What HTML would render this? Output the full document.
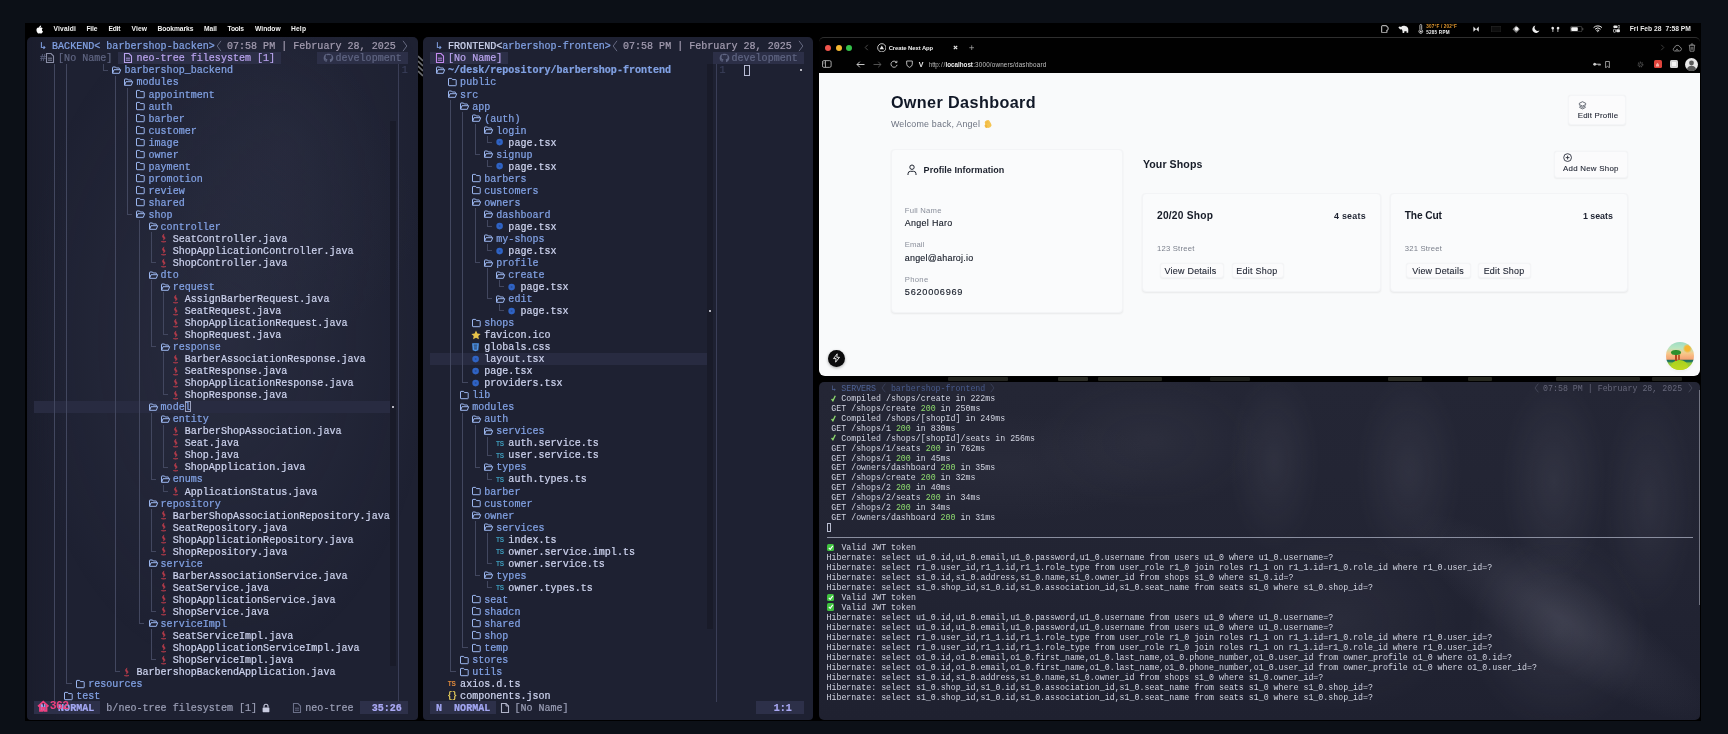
<!DOCTYPE html>
<html lang="en"><head><meta charset="utf-8"><title>desktop</title>
<style>
*{box-sizing:border-box;margin:0;padding:0}
html,body{width:1728px;height:734px;overflow:hidden;background:#0c1017}
body{position:relative;font-family:"Liberation Sans",sans-serif;will-change:transform;-webkit-font-smoothing:antialiased}
.r{position:absolute}
.t{position:absolute;white-space:pre;margin-top:1.4px;letter-spacing:.01px;-webkit-text-stroke:.22px currentColor;font-family:"Liberation Mono",monospace;font-size:10.048px;line-height:12.03px;height:12.03px}
.icw{position:absolute;width:12px;height:12.03px;display:block}
.ic{position:absolute;left:0;top:0;width:12px;height:12px;overflow:visible}
.tsi{position:absolute;left:1.7px;top:.9px;font:bold 6.5px/12.03px "Liberation Sans",sans-serif;letter-spacing:-.3px}
.jsi{position:absolute;left:1.2px;top:0;font:bold 9px/12.03px "Liberation Mono",monospace;color:#e0c85a;letter-spacing:-1px}
.s{position:absolute;white-space:pre;font-family:"Liberation Sans",sans-serif}
.m{position:absolute;white-space:pre;font-family:"Liberation Mono",monospace;font-size:8.279px;letter-spacing:.0078px;line-height:9.96px;height:9.96px;color:#d2d5e2}
.g{color:#8fdc6f}
svg{display:block}
</style></head><body>

<div class="r" style="left:24.50px;top:23.00px;width:1676.00px;height:698.00px;background:#000;"></div>
<svg class="r" style="left:34.500px;top:24.500px;width:8px;height:9px" viewBox="0 0 16 18"><path d="M11.200 4.300c.700-.900 1.200-2 1-3.300-1.100.1-2.300.800-3 1.700-.700.800-1.200 2-1 3.100 1.200.1 2.300-.600 3-1.500zM13.800 9.600c0-2 1.600-3 1.700-3-1-1.400-2.400-1.600-2.900-1.600-1.300-.100-2.400.700-3 .700s-1.600-.700-2.600-.700C5.600 5 4.300 5.800 3.600 7c-1.400 2.500-.400 6.100 1 8.100.700 1 1.500 2.100 2.500 2 1-.000 1.400-.600 2.600-.600s1.600.600 2.600.600c1.100 0 1.800-1 2.400-2 .800-1.100 1.100-2.200 1.100-2.300-.000-.000-2-.800-2-3.200z" fill="#fff"/></svg>
<span class="s" style="left:53.60px;top:25.42px;font-size:6.7px;line-height:8.71px;letter-spacing:0.153px;font-weight:bold;color:#f2f2f2;">Vivaldi</span>
<span class="s" style="left:86.40px;top:25.42px;font-size:6.7px;line-height:8.71px;letter-spacing:-0.149px;font-weight:bold;color:#f2f2f2;">File</span>
<span class="s" style="left:108.50px;top:25.42px;font-size:6.7px;line-height:8.71px;letter-spacing:-0.219px;font-weight:bold;color:#f2f2f2;">Edit</span>
<span class="s" style="left:131.50px;top:25.42px;font-size:6.7px;line-height:8.71px;letter-spacing:0.117px;font-weight:bold;color:#f2f2f2;">View</span>
<span class="s" style="left:157.50px;top:25.42px;font-size:6.7px;line-height:8.71px;letter-spacing:-0.062px;font-weight:bold;color:#f2f2f2;">Bookmarks</span>
<span class="s" style="left:204.00px;top:25.42px;font-size:6.7px;line-height:8.71px;letter-spacing:-0.011px;font-weight:bold;color:#f2f2f2;">Mail</span>
<span class="s" style="left:227.60px;top:25.42px;font-size:6.7px;line-height:8.71px;letter-spacing:-0.245px;font-weight:bold;color:#f2f2f2;">Tools</span>
<span class="s" style="left:255.00px;top:25.42px;font-size:6.7px;line-height:8.71px;letter-spacing:0.017px;font-weight:bold;color:#f2f2f2;">Window</span>
<span class="s" style="left:291.00px;top:25.42px;font-size:6.7px;line-height:8.71px;letter-spacing:0.160px;font-weight:bold;color:#f2f2f2;">Help</span>
<span class="s" style="left:1629.70px;top:25.42px;font-size:6.7px;line-height:8.71px;letter-spacing:0.033px;font-weight:bold;color:#e8e8e8;">Fri Feb 28  7:58 PM</span>
<svg class="r" style="left:1381.40px;top:24.80px;width:7.5px;height:8.5px" viewBox="0 0 7.5 8.5"><path d="M1.200 .7h4.200q.5 0 .5.5v.8h.6q.6 0 .6.600v1.800q0 .6-.6.600h-.6v2.300q0 .5-.5.500H1.200q-.5 0-.5-.5V1.200q0-.5.5-.5z" fill="none" stroke="#e8e8e8" stroke-width=".9"/></svg>
<svg class="r" style="left:1397.50px;top:24.80px;width:11px;height:8.5px" viewBox="0 0 11 8.5"><path d="M.4 2.200Q1.600 1.200 3 1.900 4.200.5 6.400.7q2.800.2 3.600 2.400.5 1.400.2 4.600H8.600l-.2-1.700q-1 .4-2 .2L6.200 8H4.600l-.1-2.300Q3.600 5 3.400 4.100q-.9.600-1.400.1Q1 3.400.4 2.200z" fill="#ececec"/></svg>
<svg class="r" style="left:1418.20px;top:24.40px;width:5.6px;height:9.8px" viewBox="0 0 5.6 9.8"><path d="M1.900 1.400a.9.9 0 0 1 1.800 0v4.400a1.900 1.900 0 1 1-1.800 0z" fill="none" stroke="#dcdcdc" stroke-width=".8"/><circle cx="2.800" cy="7.500" r="1" fill="#dcdcdc"/></svg>
<span class="s" style="left:1426.20px;top:23.52px;font-size:4.6px;line-height:5.98px;letter-spacing:0.185px;font-weight:bold;color:#e59a2e;">307°F / 202°F</span>
<span class="s" style="left:1426.20px;top:29.52px;font-size:4.6px;line-height:5.98px;letter-spacing:0.238px;font-weight:bold;color:#ededed;">5285 RPM</span>
<svg class="r" style="left:1473.40px;top:25.80px;width:6.2px;height:6.4px" viewBox="0 0 6.2 6.4"><path d="M.4.600L3.100 3.200.4 5.800zM5.800.600L3.100 3.200l2.700 2.600z" fill="#e4e4e4"/></svg>
<svg class="r" style="left:1490.80px;top:25.80px;width:10.4px;height:6.4px" viewBox="0 0 10.4 6.4"><rect x=".4" y=".4" width="9.600" height="5.600" fill="#0e0e0e" stroke="#262626" stroke-width=".7"/></svg>
<svg class="r" style="left:1511.80px;top:24.80px;width:8.4px;height:8.4px" viewBox="0 0 8.4 8.4"><path d="M4.200.5L7.900 4.200 4.200 7.900.5 4.200z" fill="#7c7c7c"/><circle cx="4.600" cy="3.800" r="1.900" fill="#f2f2f2"/></svg>
<svg class="r" style="left:1532.00px;top:25.00px;width:8px;height:8px" viewBox="0 0 8 8"><path d="M3.400.6A3.700 3.700 0 1 0 7.500 5.600 3.300 3.300 0 0 1 3.400.6z" fill="#efefef"/></svg>
<svg class="r" style="left:1551.30px;top:25.60px;width:8.8px;height:6.8px" viewBox="0 0 8.8 6.8"><path d="M1 .9q1.500-.4 2 .9.300 1.200-.7 1.600v2.600H1.500V3.400Q.3 3 .4 1.900.5 1.100 1 .9zM7.800.9q-1.500-.4-2 .9-.3 1.200.7 1.600v2.600h.800V3.400Q8.500 3 8.400 1.900 8.300 1.100 7.800.9z" fill="#e6e6e6"/></svg>
<svg class="r" style="left:1570.20px;top:26.00px;width:14px;height:6.2px" viewBox="0 0 14 6.2"><rect x=".4" y=".4" width="11.600" height="5.400" rx="1.500" fill="none" stroke="#5c5c5c" stroke-width=".7"/><rect x="1.200" y="1.200" width="6.600" height="3.800" rx=".8" fill="#f2f2f2"/><path d="M12.800 2.100v2" stroke="#5c5c5c" stroke-width=".9"/></svg>
<svg class="r" style="left:1593.00px;top:25.40px;width:9.6px;height:7.2px" viewBox="0 0 9.6 7.2"><path d="M.6 2.600a6 6 0 0 1 8.400 0M2 4.200a4 4 0 0 1 5.600 0M3.400 5.700a2 2 0 0 1 2.800 0" fill="none" stroke="#efefef" stroke-width="1"/><circle cx="4.800" cy="6.600" r=".6" fill="#efefef"/></svg>
<svg class="r" style="left:1613.00px;top:25.00px;width:7.4px;height:8px" viewBox="0 0 7.4 8"><rect x=".5" y=".5" width="3.600" height="2.600" rx=".7" fill="#e8e8e8"/><rect x="4.800" y=".5" width="2.100" height="2.600" rx=".7" fill="none" stroke="#e8e8e8" stroke-width=".7"/><rect x=".5" y="4.300" width="2.100" height="3" rx=".7" fill="none" stroke="#e8e8e8" stroke-width=".7"/><rect x="3.300" y="4.300" width="3.600" height="3" rx=".7" fill="#e8e8e8"/></svg>
<div class="r" style="left:26.50px;top:37.00px;width:391.00px;height:682.50px;background:#1e2132;border-radius:5px 5px 4px 4px;"></div>
<div class="r" style="left:422.50px;top:37.00px;width:390.00px;height:682.50px;background:#1e2132;border-radius:5px 5px 4px 4px;"></div>
<!--PANES-->
<div class="r" style="left:26.500px;top:37px;width:391px;height:682.500px;border-radius:5px;background:linear-gradient(90deg,rgba(20,22,34,.35) 0,rgba(20,22,34,0) 40px),radial-gradient(ellipse 260px 420px at 200px 300px,rgba(95,100,130,.16),transparent 80%),radial-gradient(ellipse 150px 200px at 260px 110px,rgba(95,100,130,.08),transparent)"></div>
<span class="t" style="left:40.00px;top:40.00px;color:#82a2e4;">↳</span>
<span class="t" style="left:52.06px;top:40.00px;color:#82a2e4;">BACKEND&lt;</span>
<span class="t" style="left:106.33px;top:40.00px;color:#82a2e4;">barbershop-backen&gt;</span>
<svg class="r" style="left:215.87px;top:40.00px;width:6px;height:12px" viewBox="0 0 6 12"><path d="M5 0.800L1.200 6 5 11.200" fill="none" stroke="#6d7089" stroke-width=".9"/></svg>
<span class="t" style="left:226.93px;top:40.00px;color:#a39cb0;">07:58 PM | February 28, 2025</span>
<svg class="r" style="left:401.80px;top:40.00px;width:6px;height:12px" viewBox="0 0 6 12"><path d="M1 0.800L4.800 6 1 11.200" fill="none" stroke="#6d7089" stroke-width=".9"/></svg>
<span class="t" style="left:40.00px;top:52.03px;color:#5f6582;">#</span>
<span class="icw" style="left:44.23px;top:52.03px"><svg class="ic" viewBox="0 0 12 12"><path d="M2.500 1.500h4.500l2.500 2.500v6.500h-7z" fill="none" stroke="#8a8ea6" stroke-width="1.100"/><path d="M4 6.200h4M4 8.200h4" stroke="#8a8ea6" stroke-width=".9"/></svg></span>
<span class="t" style="left:58.09px;top:52.03px;color:#5f6582;">[No Name]</span>
<div class="r" style="left:118.39px;top:52.03px;width:162.81px;height:12.03px;background:#2c2f47;"></div>
<span class="icw" style="left:122.22px;top:52.03px"><svg class="ic" viewBox="0 0 12 12"><path d="M2.500 1.500h4.500l2.500 2.500v6.500h-7z" fill="none" stroke="#b9a3ee" stroke-width="1.100"/><path d="M4 6.200h4M4 8.200h4" stroke="#b9a3ee" stroke-width=".9"/></svg></span>
<span class="t" style="left:136.48px;top:52.03px;color:#b9a3ee;">neo-tree filesystem [1]</span>
<div class="r" style="left:317.38px;top:52.03px;width:90.45px;height:12.03px;background:#2c2f47;"></div>
<span class="icw" style="left:322.41px;top:52.03px"><svg class="ic" viewBox="0 0 12 12"><path d="M6 1.800a4.200 4.200 0 0 0-1.400 8.200v-1.600q-1.600.3-1.900-.9.900.1 1.300.8.500.5 1.200.1.100-.5.400-.8-2.200-.3-2.200-2.300 0-.8.500-1.400-.2-.7.100-1.300.700 0 1.400.6 1.200-.3 2.400 0 .700-.6 1.400-.6.300.6.100 1.300.5.600.5 1.400 0 2-2.200 2.300.4.400.4 1.100v1.500a4.200 4.200 0 0 0-2-8.400z" fill="#5f6582"/></svg></span>
<span class="t" style="left:335.47px;top:52.03px;color:#5f6582;">development</span>
<div class="r" style="left:34.00px;top:400.90px;width:355.74px;height:12.03px;background:#282b41;"></div>
<div class="r" style="left:389.74px;top:120.60px;width:6.03px;height:544.96px;background:#191b29;"></div>
<div class="r" style="left:398.29px;top:64.06px;width:1.00px;height:637.59px;background:#3a3e57;"></div>
<span class="t" style="left:401.80px;top:64.06px;color:#3a3f5a;">1</span>
<div class="r" style="left:391.54px;top:405.90px;width:2.20px;height:2.20px;background:#e8e8f0;border-radius:50%;"></div>
<div class="r" style="left:54.38px;top:64.06px;width:1.00px;height:637.59px;background:#42475f;"></div>
<div class="r" style="left:66.44px;top:64.06px;width:1.00px;height:613.53px;background:#42475f;"></div>
<div class="r" style="left:102.62px;top:63.76px;width:1.00px;height:6.81px;background:#42475f;"></div>
<div class="r" style="left:102.62px;top:69.58px;width:5.43px;height:1.00px;background:#42475f;"></div>
<span class="icw" style="left:110.36px;top:64.06px"><svg class="ic" viewBox="0 0 12 12"><path d="M2.500 9.200V3.500q0-.500.500-.500h2.500l.800 1h2.700q.500 0 .500.500v1" fill="none" stroke="#9bb6ee" stroke-width="1"/><path d="M2.600 9.300l1.400-3.600h6.700l-1.400 3.600z" fill="none" stroke="#9bb6ee" stroke-width="1" stroke-linejoin="round"/></svg></span>
<span class="t" style="left:124.42px;top:64.06px;color:#82a2e4;">barbershop_backend</span>
<div class="r" style="left:114.67px;top:75.79px;width:1.00px;height:12.63px;background:#42475f;"></div>
<span class="icw" style="left:122.42px;top:76.09px"><svg class="ic" viewBox="0 0 12 12"><path d="M2.500 9.200V3.500q0-.500.500-.500h2.500l.800 1h2.700q.500 0 .500.500v1" fill="none" stroke="#9bb6ee" stroke-width="1"/><path d="M2.600 9.300l1.400-3.600h6.700l-1.400 3.600z" fill="none" stroke="#9bb6ee" stroke-width="1" stroke-linejoin="round"/></svg></span>
<span class="t" style="left:136.48px;top:76.09px;color:#82a2e4;">modules</span>
<div class="r" style="left:114.67px;top:87.82px;width:1.00px;height:12.63px;background:#42475f;"></div>
<div class="r" style="left:126.73px;top:87.82px;width:1.00px;height:12.63px;background:#42475f;"></div>
<span class="icw" style="left:134.48px;top:88.12px"><svg class="ic" viewBox="0 0 12 12"><path d="M2.500 9.200V2.900q0-.500.500-.500h2.600l.900 1.200h3.200q.500 0 .500.500v5.100q0 .500-.500.500H3q-.500 0-.500-.500z" fill="none" stroke="#9bb6ee" stroke-width="1"/></svg></span>
<span class="t" style="left:148.54px;top:88.12px;color:#82a2e4;">appointment</span>
<div class="r" style="left:114.67px;top:99.85px;width:1.00px;height:12.63px;background:#42475f;"></div>
<div class="r" style="left:126.73px;top:99.85px;width:1.00px;height:12.63px;background:#42475f;"></div>
<span class="icw" style="left:134.48px;top:100.15px"><svg class="ic" viewBox="0 0 12 12"><path d="M2.500 9.200V2.900q0-.500.500-.500h2.600l.900 1.200h3.200q.500 0 .500.500v5.100q0 .500-.500.500H3q-.500 0-.500-.500z" fill="none" stroke="#9bb6ee" stroke-width="1"/></svg></span>
<span class="t" style="left:148.54px;top:100.15px;color:#82a2e4;">auth</span>
<div class="r" style="left:114.67px;top:111.88px;width:1.00px;height:12.63px;background:#42475f;"></div>
<div class="r" style="left:126.73px;top:111.88px;width:1.00px;height:12.63px;background:#42475f;"></div>
<span class="icw" style="left:134.48px;top:112.18px"><svg class="ic" viewBox="0 0 12 12"><path d="M2.500 9.200V2.900q0-.500.500-.500h2.600l.900 1.200h3.200q.500 0 .500.500v5.100q0 .500-.500.500H3q-.500 0-.500-.500z" fill="none" stroke="#9bb6ee" stroke-width="1"/></svg></span>
<span class="t" style="left:148.54px;top:112.18px;color:#82a2e4;">barber</span>
<div class="r" style="left:114.67px;top:123.91px;width:1.00px;height:12.63px;background:#42475f;"></div>
<div class="r" style="left:126.73px;top:123.91px;width:1.00px;height:12.63px;background:#42475f;"></div>
<span class="icw" style="left:134.48px;top:124.21px"><svg class="ic" viewBox="0 0 12 12"><path d="M2.500 9.200V2.900q0-.500.500-.500h2.600l.900 1.200h3.200q.500 0 .500.500v5.100q0 .500-.500.500H3q-.500 0-.500-.500z" fill="none" stroke="#9bb6ee" stroke-width="1"/></svg></span>
<span class="t" style="left:148.54px;top:124.21px;color:#82a2e4;">customer</span>
<div class="r" style="left:114.67px;top:135.94px;width:1.00px;height:12.63px;background:#42475f;"></div>
<div class="r" style="left:126.73px;top:135.94px;width:1.00px;height:12.63px;background:#42475f;"></div>
<span class="icw" style="left:134.48px;top:136.24px"><svg class="ic" viewBox="0 0 12 12"><path d="M2.500 9.200V2.900q0-.500.500-.500h2.600l.900 1.200h3.200q.500 0 .500.500v5.100q0 .500-.500.500H3q-.500 0-.500-.500z" fill="none" stroke="#9bb6ee" stroke-width="1"/></svg></span>
<span class="t" style="left:148.54px;top:136.24px;color:#82a2e4;">image</span>
<div class="r" style="left:114.67px;top:147.97px;width:1.00px;height:12.63px;background:#42475f;"></div>
<div class="r" style="left:126.73px;top:147.97px;width:1.00px;height:12.63px;background:#42475f;"></div>
<span class="icw" style="left:134.48px;top:148.27px"><svg class="ic" viewBox="0 0 12 12"><path d="M2.500 9.200V2.900q0-.500.500-.500h2.600l.900 1.200h3.200q.500 0 .500.500v5.100q0 .500-.500.500H3q-.500 0-.500-.500z" fill="none" stroke="#9bb6ee" stroke-width="1"/></svg></span>
<span class="t" style="left:148.54px;top:148.27px;color:#82a2e4;">owner</span>
<div class="r" style="left:114.67px;top:160.00px;width:1.00px;height:12.63px;background:#42475f;"></div>
<div class="r" style="left:126.73px;top:160.00px;width:1.00px;height:12.63px;background:#42475f;"></div>
<span class="icw" style="left:134.48px;top:160.30px"><svg class="ic" viewBox="0 0 12 12"><path d="M2.500 9.200V2.900q0-.500.500-.500h2.600l.900 1.200h3.200q.500 0 .500.500v5.100q0 .500-.500.500H3q-.500 0-.500-.500z" fill="none" stroke="#9bb6ee" stroke-width="1"/></svg></span>
<span class="t" style="left:148.54px;top:160.30px;color:#82a2e4;">payment</span>
<div class="r" style="left:114.67px;top:172.03px;width:1.00px;height:12.63px;background:#42475f;"></div>
<div class="r" style="left:126.73px;top:172.03px;width:1.00px;height:12.63px;background:#42475f;"></div>
<span class="icw" style="left:134.48px;top:172.33px"><svg class="ic" viewBox="0 0 12 12"><path d="M2.500 9.200V2.900q0-.500.500-.500h2.600l.900 1.200h3.200q.500 0 .500.500v5.100q0 .500-.500.500H3q-.500 0-.500-.500z" fill="none" stroke="#9bb6ee" stroke-width="1"/></svg></span>
<span class="t" style="left:148.54px;top:172.33px;color:#82a2e4;">promotion</span>
<div class="r" style="left:114.67px;top:184.06px;width:1.00px;height:12.63px;background:#42475f;"></div>
<div class="r" style="left:126.73px;top:184.06px;width:1.00px;height:12.63px;background:#42475f;"></div>
<span class="icw" style="left:134.48px;top:184.36px"><svg class="ic" viewBox="0 0 12 12"><path d="M2.500 9.200V2.900q0-.500.500-.500h2.600l.900 1.200h3.200q.500 0 .500.500v5.100q0 .500-.500.500H3q-.500 0-.500-.500z" fill="none" stroke="#9bb6ee" stroke-width="1"/></svg></span>
<span class="t" style="left:148.54px;top:184.36px;color:#82a2e4;">review</span>
<div class="r" style="left:114.67px;top:196.09px;width:1.00px;height:12.63px;background:#42475f;"></div>
<div class="r" style="left:126.73px;top:196.09px;width:1.00px;height:12.63px;background:#42475f;"></div>
<span class="icw" style="left:134.48px;top:196.39px"><svg class="ic" viewBox="0 0 12 12"><path d="M2.500 9.200V2.900q0-.500.500-.500h2.600l.900 1.200h3.200q.500 0 .500.500v5.100q0 .500-.500.500H3q-.500 0-.500-.500z" fill="none" stroke="#9bb6ee" stroke-width="1"/></svg></span>
<span class="t" style="left:148.54px;top:196.39px;color:#82a2e4;">shared</span>
<div class="r" style="left:114.67px;top:208.12px;width:1.00px;height:12.63px;background:#42475f;"></div>
<div class="r" style="left:126.73px;top:208.12px;width:1.00px;height:6.81px;background:#42475f;"></div>
<div class="r" style="left:126.73px;top:213.93px;width:5.43px;height:1.00px;background:#42475f;"></div>
<span class="icw" style="left:134.48px;top:208.42px"><svg class="ic" viewBox="0 0 12 12"><path d="M2.500 9.200V3.500q0-.500.500-.500h2.500l.800 1h2.700q.500 0 .500.500v1" fill="none" stroke="#9bb6ee" stroke-width="1"/><path d="M2.600 9.300l1.400-3.600h6.700l-1.400 3.600z" fill="none" stroke="#9bb6ee" stroke-width="1" stroke-linejoin="round"/></svg></span>
<span class="t" style="left:148.54px;top:208.42px;color:#82a2e4;">shop</span>
<div class="r" style="left:114.67px;top:220.15px;width:1.00px;height:12.63px;background:#42475f;"></div>
<div class="r" style="left:138.80px;top:220.15px;width:1.00px;height:12.63px;background:#42475f;"></div>
<span class="icw" style="left:146.54px;top:220.45px"><svg class="ic" viewBox="0 0 12 12"><path d="M2.500 9.200V3.500q0-.500.500-.500h2.500l.800 1h2.700q.500 0 .500.500v1" fill="none" stroke="#9bb6ee" stroke-width="1"/><path d="M2.600 9.300l1.400-3.600h6.700l-1.400 3.600z" fill="none" stroke="#9bb6ee" stroke-width="1" stroke-linejoin="round"/></svg></span>
<span class="t" style="left:160.60px;top:220.45px;color:#82a2e4;">controller</span>
<div class="r" style="left:114.67px;top:232.18px;width:1.00px;height:12.63px;background:#42475f;"></div>
<div class="r" style="left:138.80px;top:232.18px;width:1.00px;height:12.63px;background:#42475f;"></div>
<div class="r" style="left:150.86px;top:232.18px;width:1.00px;height:12.63px;background:#42475f;"></div>
<span class="icw" style="left:158.60px;top:232.48px"><svg class="ic" viewBox="0 0 12 12"><path d="M5.100 1.900c-1.900 1.500-2.200 2.700-.8 4 .8.800.6 1.500-.3 2.200 2.200-.9 2.600-2 1.400-3.300-.9-1-.9-1.800-.3-2.900z" fill="#b63c4b" stroke="#b63c4b" stroke-width=".5"/><path d="M2.300 9.500q2.300.9 4.600 0" stroke="#b63c4b" stroke-width="1.200" fill="none"/></svg></span>
<span class="t" style="left:172.66px;top:232.48px;color:#cdd3ee;">SeatController.java</span>
<div class="r" style="left:114.67px;top:244.21px;width:1.00px;height:12.63px;background:#42475f;"></div>
<div class="r" style="left:138.80px;top:244.21px;width:1.00px;height:12.63px;background:#42475f;"></div>
<div class="r" style="left:150.86px;top:244.21px;width:1.00px;height:12.63px;background:#42475f;"></div>
<span class="icw" style="left:158.60px;top:244.51px"><svg class="ic" viewBox="0 0 12 12"><path d="M5.100 1.900c-1.900 1.500-2.200 2.700-.8 4 .8.800.6 1.500-.3 2.200 2.200-.9 2.600-2 1.400-3.300-.9-1-.9-1.800-.3-2.900z" fill="#b63c4b" stroke="#b63c4b" stroke-width=".5"/><path d="M2.300 9.500q2.300.9 4.600 0" stroke="#b63c4b" stroke-width="1.200" fill="none"/></svg></span>
<span class="t" style="left:172.66px;top:244.51px;color:#cdd3ee;">ShopApplicationController.java</span>
<div class="r" style="left:114.67px;top:256.24px;width:1.00px;height:12.63px;background:#42475f;"></div>
<div class="r" style="left:138.80px;top:256.24px;width:1.00px;height:12.63px;background:#42475f;"></div>
<div class="r" style="left:150.86px;top:256.24px;width:1.00px;height:6.81px;background:#42475f;"></div>
<div class="r" style="left:150.86px;top:262.05px;width:5.43px;height:1.00px;background:#42475f;"></div>
<span class="icw" style="left:158.60px;top:256.54px"><svg class="ic" viewBox="0 0 12 12"><path d="M5.100 1.900c-1.900 1.500-2.200 2.700-.8 4 .8.800.6 1.500-.3 2.200 2.200-.9 2.600-2 1.400-3.300-.9-1-.9-1.800-.3-2.900z" fill="#b63c4b" stroke="#b63c4b" stroke-width=".5"/><path d="M2.300 9.500q2.300.9 4.600 0" stroke="#b63c4b" stroke-width="1.200" fill="none"/></svg></span>
<span class="t" style="left:172.66px;top:256.54px;color:#cdd3ee;">ShopController.java</span>
<div class="r" style="left:114.67px;top:268.27px;width:1.00px;height:12.63px;background:#42475f;"></div>
<div class="r" style="left:138.80px;top:268.27px;width:1.00px;height:12.63px;background:#42475f;"></div>
<span class="icw" style="left:146.54px;top:268.57px"><svg class="ic" viewBox="0 0 12 12"><path d="M2.500 9.200V3.500q0-.500.500-.500h2.500l.800 1h2.700q.500 0 .500.500v1" fill="none" stroke="#9bb6ee" stroke-width="1"/><path d="M2.600 9.300l1.400-3.600h6.700l-1.400 3.600z" fill="none" stroke="#9bb6ee" stroke-width="1" stroke-linejoin="round"/></svg></span>
<span class="t" style="left:160.60px;top:268.57px;color:#82a2e4;">dto</span>
<div class="r" style="left:114.67px;top:280.30px;width:1.00px;height:12.63px;background:#42475f;"></div>
<div class="r" style="left:138.80px;top:280.30px;width:1.00px;height:12.63px;background:#42475f;"></div>
<div class="r" style="left:150.86px;top:280.30px;width:1.00px;height:12.63px;background:#42475f;"></div>
<span class="icw" style="left:158.60px;top:280.60px"><svg class="ic" viewBox="0 0 12 12"><path d="M2.500 9.200V3.500q0-.500.500-.500h2.500l.800 1h2.700q.500 0 .500.500v1" fill="none" stroke="#9bb6ee" stroke-width="1"/><path d="M2.600 9.300l1.400-3.600h6.700l-1.400 3.600z" fill="none" stroke="#9bb6ee" stroke-width="1" stroke-linejoin="round"/></svg></span>
<span class="t" style="left:172.66px;top:280.60px;color:#82a2e4;">request</span>
<div class="r" style="left:114.67px;top:292.33px;width:1.00px;height:12.63px;background:#42475f;"></div>
<div class="r" style="left:138.80px;top:292.33px;width:1.00px;height:12.63px;background:#42475f;"></div>
<div class="r" style="left:150.86px;top:292.33px;width:1.00px;height:12.63px;background:#42475f;"></div>
<div class="r" style="left:162.92px;top:292.33px;width:1.00px;height:12.63px;background:#42475f;"></div>
<span class="icw" style="left:170.66px;top:292.63px"><svg class="ic" viewBox="0 0 12 12"><path d="M5.100 1.900c-1.900 1.500-2.200 2.700-.8 4 .8.800.6 1.500-.3 2.200 2.200-.9 2.600-2 1.400-3.300-.9-1-.9-1.800-.3-2.900z" fill="#b63c4b" stroke="#b63c4b" stroke-width=".5"/><path d="M2.300 9.500q2.300.9 4.600 0" stroke="#b63c4b" stroke-width="1.200" fill="none"/></svg></span>
<span class="t" style="left:184.72px;top:292.63px;color:#cdd3ee;">AssignBarberRequest.java</span>
<div class="r" style="left:114.67px;top:304.36px;width:1.00px;height:12.63px;background:#42475f;"></div>
<div class="r" style="left:138.80px;top:304.36px;width:1.00px;height:12.63px;background:#42475f;"></div>
<div class="r" style="left:150.86px;top:304.36px;width:1.00px;height:12.63px;background:#42475f;"></div>
<div class="r" style="left:162.92px;top:304.36px;width:1.00px;height:12.63px;background:#42475f;"></div>
<span class="icw" style="left:170.66px;top:304.66px"><svg class="ic" viewBox="0 0 12 12"><path d="M5.100 1.900c-1.900 1.500-2.200 2.700-.8 4 .8.800.6 1.500-.3 2.200 2.200-.9 2.600-2 1.400-3.300-.9-1-.9-1.800-.3-2.900z" fill="#b63c4b" stroke="#b63c4b" stroke-width=".5"/><path d="M2.300 9.500q2.300.9 4.600 0" stroke="#b63c4b" stroke-width="1.200" fill="none"/></svg></span>
<span class="t" style="left:184.72px;top:304.66px;color:#cdd3ee;">SeatRequest.java</span>
<div class="r" style="left:114.67px;top:316.39px;width:1.00px;height:12.63px;background:#42475f;"></div>
<div class="r" style="left:138.80px;top:316.39px;width:1.00px;height:12.63px;background:#42475f;"></div>
<div class="r" style="left:150.86px;top:316.39px;width:1.00px;height:12.63px;background:#42475f;"></div>
<div class="r" style="left:162.92px;top:316.39px;width:1.00px;height:12.63px;background:#42475f;"></div>
<span class="icw" style="left:170.66px;top:316.69px"><svg class="ic" viewBox="0 0 12 12"><path d="M5.100 1.900c-1.900 1.500-2.200 2.700-.8 4 .8.800.6 1.500-.3 2.200 2.200-.9 2.600-2 1.400-3.300-.9-1-.9-1.800-.3-2.900z" fill="#b63c4b" stroke="#b63c4b" stroke-width=".5"/><path d="M2.300 9.500q2.300.9 4.600 0" stroke="#b63c4b" stroke-width="1.200" fill="none"/></svg></span>
<span class="t" style="left:184.72px;top:316.69px;color:#cdd3ee;">ShopApplicationRequest.java</span>
<div class="r" style="left:114.67px;top:328.42px;width:1.00px;height:12.63px;background:#42475f;"></div>
<div class="r" style="left:138.80px;top:328.42px;width:1.00px;height:12.63px;background:#42475f;"></div>
<div class="r" style="left:150.86px;top:328.42px;width:1.00px;height:12.63px;background:#42475f;"></div>
<div class="r" style="left:162.92px;top:328.42px;width:1.00px;height:6.81px;background:#42475f;"></div>
<div class="r" style="left:162.92px;top:334.23px;width:5.43px;height:1.00px;background:#42475f;"></div>
<span class="icw" style="left:170.66px;top:328.72px"><svg class="ic" viewBox="0 0 12 12"><path d="M5.100 1.900c-1.900 1.500-2.200 2.700-.8 4 .8.800.6 1.500-.3 2.200 2.200-.9 2.600-2 1.400-3.300-.9-1-.9-1.800-.3-2.900z" fill="#b63c4b" stroke="#b63c4b" stroke-width=".5"/><path d="M2.300 9.500q2.300.9 4.600 0" stroke="#b63c4b" stroke-width="1.200" fill="none"/></svg></span>
<span class="t" style="left:184.72px;top:328.72px;color:#cdd3ee;">ShopRequest.java</span>
<div class="r" style="left:114.67px;top:340.45px;width:1.00px;height:12.63px;background:#42475f;"></div>
<div class="r" style="left:138.80px;top:340.45px;width:1.00px;height:12.63px;background:#42475f;"></div>
<div class="r" style="left:150.86px;top:340.45px;width:1.00px;height:6.81px;background:#42475f;"></div>
<div class="r" style="left:150.86px;top:346.26px;width:5.43px;height:1.00px;background:#42475f;"></div>
<span class="icw" style="left:158.60px;top:340.75px"><svg class="ic" viewBox="0 0 12 12"><path d="M2.500 9.200V3.500q0-.500.500-.500h2.500l.800 1h2.700q.500 0 .500.500v1" fill="none" stroke="#9bb6ee" stroke-width="1"/><path d="M2.600 9.300l1.400-3.600h6.700l-1.400 3.600z" fill="none" stroke="#9bb6ee" stroke-width="1" stroke-linejoin="round"/></svg></span>
<span class="t" style="left:172.66px;top:340.75px;color:#82a2e4;">response</span>
<div class="r" style="left:114.67px;top:352.48px;width:1.00px;height:12.63px;background:#42475f;"></div>
<div class="r" style="left:138.80px;top:352.48px;width:1.00px;height:12.63px;background:#42475f;"></div>
<div class="r" style="left:162.92px;top:352.48px;width:1.00px;height:12.63px;background:#42475f;"></div>
<span class="icw" style="left:170.66px;top:352.78px"><svg class="ic" viewBox="0 0 12 12"><path d="M5.100 1.900c-1.900 1.500-2.200 2.700-.8 4 .8.800.6 1.500-.3 2.200 2.200-.9 2.600-2 1.400-3.300-.9-1-.9-1.800-.3-2.900z" fill="#b63c4b" stroke="#b63c4b" stroke-width=".5"/><path d="M2.300 9.500q2.300.9 4.600 0" stroke="#b63c4b" stroke-width="1.200" fill="none"/></svg></span>
<span class="t" style="left:184.72px;top:352.78px;color:#cdd3ee;">BarberAssociationResponse.java</span>
<div class="r" style="left:114.67px;top:364.51px;width:1.00px;height:12.63px;background:#42475f;"></div>
<div class="r" style="left:138.80px;top:364.51px;width:1.00px;height:12.63px;background:#42475f;"></div>
<div class="r" style="left:162.92px;top:364.51px;width:1.00px;height:12.63px;background:#42475f;"></div>
<span class="icw" style="left:170.66px;top:364.81px"><svg class="ic" viewBox="0 0 12 12"><path d="M5.100 1.900c-1.900 1.500-2.200 2.700-.8 4 .8.800.6 1.500-.3 2.200 2.200-.9 2.600-2 1.400-3.300-.9-1-.9-1.800-.3-2.900z" fill="#b63c4b" stroke="#b63c4b" stroke-width=".5"/><path d="M2.300 9.500q2.300.9 4.600 0" stroke="#b63c4b" stroke-width="1.200" fill="none"/></svg></span>
<span class="t" style="left:184.72px;top:364.81px;color:#cdd3ee;">SeatResponse.java</span>
<div class="r" style="left:114.67px;top:376.54px;width:1.00px;height:12.63px;background:#42475f;"></div>
<div class="r" style="left:138.80px;top:376.54px;width:1.00px;height:12.63px;background:#42475f;"></div>
<div class="r" style="left:162.92px;top:376.54px;width:1.00px;height:12.63px;background:#42475f;"></div>
<span class="icw" style="left:170.66px;top:376.84px"><svg class="ic" viewBox="0 0 12 12"><path d="M5.100 1.900c-1.900 1.500-2.200 2.700-.8 4 .8.800.6 1.500-.3 2.200 2.200-.9 2.600-2 1.400-3.300-.9-1-.9-1.800-.3-2.900z" fill="#b63c4b" stroke="#b63c4b" stroke-width=".5"/><path d="M2.300 9.500q2.300.9 4.600 0" stroke="#b63c4b" stroke-width="1.200" fill="none"/></svg></span>
<span class="t" style="left:184.72px;top:376.84px;color:#cdd3ee;">ShopApplicationResponse.java</span>
<div class="r" style="left:114.67px;top:388.57px;width:1.00px;height:12.63px;background:#42475f;"></div>
<div class="r" style="left:138.80px;top:388.57px;width:1.00px;height:12.63px;background:#42475f;"></div>
<div class="r" style="left:162.92px;top:388.57px;width:1.00px;height:6.81px;background:#42475f;"></div>
<div class="r" style="left:162.92px;top:394.38px;width:5.43px;height:1.00px;background:#42475f;"></div>
<span class="icw" style="left:170.66px;top:388.87px"><svg class="ic" viewBox="0 0 12 12"><path d="M5.100 1.900c-1.900 1.500-2.200 2.700-.8 4 .8.800.6 1.500-.3 2.200 2.200-.9 2.600-2 1.400-3.300-.9-1-.9-1.800-.3-2.900z" fill="#b63c4b" stroke="#b63c4b" stroke-width=".5"/><path d="M2.300 9.500q2.300.9 4.600 0" stroke="#b63c4b" stroke-width="1.200" fill="none"/></svg></span>
<span class="t" style="left:184.72px;top:388.87px;color:#cdd3ee;">ShopResponse.java</span>
<div class="r" style="left:114.67px;top:400.60px;width:1.00px;height:12.63px;background:#42475f;"></div>
<div class="r" style="left:138.80px;top:400.60px;width:1.00px;height:12.63px;background:#42475f;"></div>
<span class="icw" style="left:146.54px;top:400.90px"><svg class="ic" viewBox="0 0 12 12"><path d="M2.500 9.200V3.500q0-.500.500-.500h2.500l.800 1h2.700q.500 0 .500.500v1" fill="none" stroke="#9bb6ee" stroke-width="1"/><path d="M2.600 9.300l1.400-3.600h6.700l-1.400 3.600z" fill="none" stroke="#9bb6ee" stroke-width="1" stroke-linejoin="round"/></svg></span>
<span class="t" style="left:160.60px;top:400.90px;color:#82a2e4;">model</span>
<div class="r" style="left:114.67px;top:412.63px;width:1.00px;height:12.63px;background:#42475f;"></div>
<div class="r" style="left:138.80px;top:412.63px;width:1.00px;height:12.63px;background:#42475f;"></div>
<div class="r" style="left:150.86px;top:412.63px;width:1.00px;height:12.63px;background:#42475f;"></div>
<span class="icw" style="left:158.60px;top:412.93px"><svg class="ic" viewBox="0 0 12 12"><path d="M2.500 9.200V3.500q0-.500.500-.500h2.500l.800 1h2.700q.500 0 .500.500v1" fill="none" stroke="#9bb6ee" stroke-width="1"/><path d="M2.600 9.300l1.400-3.600h6.700l-1.400 3.600z" fill="none" stroke="#9bb6ee" stroke-width="1" stroke-linejoin="round"/></svg></span>
<span class="t" style="left:172.66px;top:412.93px;color:#82a2e4;">entity</span>
<div class="r" style="left:114.67px;top:424.66px;width:1.00px;height:12.63px;background:#42475f;"></div>
<div class="r" style="left:138.80px;top:424.66px;width:1.00px;height:12.63px;background:#42475f;"></div>
<div class="r" style="left:150.86px;top:424.66px;width:1.00px;height:12.63px;background:#42475f;"></div>
<div class="r" style="left:162.92px;top:424.66px;width:1.00px;height:12.63px;background:#42475f;"></div>
<span class="icw" style="left:170.66px;top:424.96px"><svg class="ic" viewBox="0 0 12 12"><path d="M5.100 1.900c-1.900 1.500-2.200 2.700-.8 4 .8.800.6 1.500-.3 2.200 2.200-.9 2.600-2 1.400-3.300-.9-1-.9-1.800-.3-2.900z" fill="#b63c4b" stroke="#b63c4b" stroke-width=".5"/><path d="M2.300 9.500q2.300.9 4.600 0" stroke="#b63c4b" stroke-width="1.200" fill="none"/></svg></span>
<span class="t" style="left:184.72px;top:424.96px;color:#cdd3ee;">BarberShopAssociation.java</span>
<div class="r" style="left:114.67px;top:436.69px;width:1.00px;height:12.63px;background:#42475f;"></div>
<div class="r" style="left:138.80px;top:436.69px;width:1.00px;height:12.63px;background:#42475f;"></div>
<div class="r" style="left:150.86px;top:436.69px;width:1.00px;height:12.63px;background:#42475f;"></div>
<div class="r" style="left:162.92px;top:436.69px;width:1.00px;height:12.63px;background:#42475f;"></div>
<span class="icw" style="left:170.66px;top:436.99px"><svg class="ic" viewBox="0 0 12 12"><path d="M5.100 1.900c-1.900 1.500-2.200 2.700-.8 4 .8.800.6 1.500-.3 2.200 2.200-.9 2.600-2 1.400-3.300-.9-1-.9-1.800-.3-2.900z" fill="#b63c4b" stroke="#b63c4b" stroke-width=".5"/><path d="M2.300 9.500q2.300.9 4.600 0" stroke="#b63c4b" stroke-width="1.200" fill="none"/></svg></span>
<span class="t" style="left:184.72px;top:436.99px;color:#cdd3ee;">Seat.java</span>
<div class="r" style="left:114.67px;top:448.72px;width:1.00px;height:12.63px;background:#42475f;"></div>
<div class="r" style="left:138.80px;top:448.72px;width:1.00px;height:12.63px;background:#42475f;"></div>
<div class="r" style="left:150.86px;top:448.72px;width:1.00px;height:12.63px;background:#42475f;"></div>
<div class="r" style="left:162.92px;top:448.72px;width:1.00px;height:12.63px;background:#42475f;"></div>
<span class="icw" style="left:170.66px;top:449.02px"><svg class="ic" viewBox="0 0 12 12"><path d="M5.100 1.900c-1.900 1.500-2.200 2.700-.8 4 .8.800.6 1.500-.3 2.200 2.200-.9 2.600-2 1.400-3.300-.9-1-.9-1.800-.3-2.900z" fill="#b63c4b" stroke="#b63c4b" stroke-width=".5"/><path d="M2.300 9.500q2.300.9 4.600 0" stroke="#b63c4b" stroke-width="1.200" fill="none"/></svg></span>
<span class="t" style="left:184.72px;top:449.02px;color:#cdd3ee;">Shop.java</span>
<div class="r" style="left:114.67px;top:460.75px;width:1.00px;height:12.63px;background:#42475f;"></div>
<div class="r" style="left:138.80px;top:460.75px;width:1.00px;height:12.63px;background:#42475f;"></div>
<div class="r" style="left:150.86px;top:460.75px;width:1.00px;height:12.63px;background:#42475f;"></div>
<div class="r" style="left:162.92px;top:460.75px;width:1.00px;height:6.81px;background:#42475f;"></div>
<div class="r" style="left:162.92px;top:466.56px;width:5.43px;height:1.00px;background:#42475f;"></div>
<span class="icw" style="left:170.66px;top:461.05px"><svg class="ic" viewBox="0 0 12 12"><path d="M5.100 1.900c-1.900 1.500-2.200 2.700-.8 4 .8.800.6 1.500-.3 2.200 2.200-.9 2.600-2 1.400-3.300-.9-1-.9-1.800-.3-2.900z" fill="#b63c4b" stroke="#b63c4b" stroke-width=".5"/><path d="M2.300 9.500q2.300.9 4.600 0" stroke="#b63c4b" stroke-width="1.200" fill="none"/></svg></span>
<span class="t" style="left:184.72px;top:461.05px;color:#cdd3ee;">ShopApplication.java</span>
<div class="r" style="left:114.67px;top:472.78px;width:1.00px;height:12.63px;background:#42475f;"></div>
<div class="r" style="left:138.80px;top:472.78px;width:1.00px;height:12.63px;background:#42475f;"></div>
<div class="r" style="left:150.86px;top:472.78px;width:1.00px;height:6.81px;background:#42475f;"></div>
<div class="r" style="left:150.86px;top:478.59px;width:5.43px;height:1.00px;background:#42475f;"></div>
<span class="icw" style="left:158.60px;top:473.08px"><svg class="ic" viewBox="0 0 12 12"><path d="M2.500 9.200V3.500q0-.500.500-.500h2.500l.800 1h2.700q.500 0 .500.500v1" fill="none" stroke="#9bb6ee" stroke-width="1"/><path d="M2.600 9.300l1.400-3.600h6.700l-1.400 3.600z" fill="none" stroke="#9bb6ee" stroke-width="1" stroke-linejoin="round"/></svg></span>
<span class="t" style="left:172.66px;top:473.08px;color:#82a2e4;">enums</span>
<div class="r" style="left:114.67px;top:484.81px;width:1.00px;height:12.63px;background:#42475f;"></div>
<div class="r" style="left:138.80px;top:484.81px;width:1.00px;height:12.63px;background:#42475f;"></div>
<div class="r" style="left:162.92px;top:484.81px;width:1.00px;height:6.81px;background:#42475f;"></div>
<div class="r" style="left:162.92px;top:490.62px;width:5.43px;height:1.00px;background:#42475f;"></div>
<span class="icw" style="left:170.66px;top:485.11px"><svg class="ic" viewBox="0 0 12 12"><path d="M5.100 1.900c-1.900 1.500-2.200 2.700-.8 4 .8.800.6 1.500-.3 2.200 2.200-.9 2.600-2 1.400-3.300-.9-1-.9-1.800-.3-2.900z" fill="#b63c4b" stroke="#b63c4b" stroke-width=".5"/><path d="M2.300 9.500q2.300.9 4.600 0" stroke="#b63c4b" stroke-width="1.200" fill="none"/></svg></span>
<span class="t" style="left:184.72px;top:485.11px;color:#cdd3ee;">ApplicationStatus.java</span>
<div class="r" style="left:114.67px;top:496.84px;width:1.00px;height:12.63px;background:#42475f;"></div>
<div class="r" style="left:138.80px;top:496.84px;width:1.00px;height:12.63px;background:#42475f;"></div>
<span class="icw" style="left:146.54px;top:497.14px"><svg class="ic" viewBox="0 0 12 12"><path d="M2.500 9.200V3.500q0-.500.500-.500h2.500l.800 1h2.700q.500 0 .500.500v1" fill="none" stroke="#9bb6ee" stroke-width="1"/><path d="M2.600 9.300l1.400-3.600h6.700l-1.400 3.600z" fill="none" stroke="#9bb6ee" stroke-width="1" stroke-linejoin="round"/></svg></span>
<span class="t" style="left:160.60px;top:497.14px;color:#82a2e4;">repository</span>
<div class="r" style="left:114.67px;top:508.87px;width:1.00px;height:12.63px;background:#42475f;"></div>
<div class="r" style="left:138.80px;top:508.87px;width:1.00px;height:12.63px;background:#42475f;"></div>
<div class="r" style="left:150.86px;top:508.87px;width:1.00px;height:12.63px;background:#42475f;"></div>
<span class="icw" style="left:158.60px;top:509.17px"><svg class="ic" viewBox="0 0 12 12"><path d="M5.100 1.900c-1.900 1.500-2.200 2.700-.8 4 .8.800.6 1.500-.3 2.200 2.200-.9 2.600-2 1.400-3.300-.9-1-.9-1.800-.3-2.900z" fill="#b63c4b" stroke="#b63c4b" stroke-width=".5"/><path d="M2.300 9.500q2.300.9 4.600 0" stroke="#b63c4b" stroke-width="1.200" fill="none"/></svg></span>
<span class="t" style="left:172.66px;top:509.17px;color:#cdd3ee;">BarberShopAssociationRepository.java</span>
<div class="r" style="left:114.67px;top:520.90px;width:1.00px;height:12.63px;background:#42475f;"></div>
<div class="r" style="left:138.80px;top:520.90px;width:1.00px;height:12.63px;background:#42475f;"></div>
<div class="r" style="left:150.86px;top:520.90px;width:1.00px;height:12.63px;background:#42475f;"></div>
<span class="icw" style="left:158.60px;top:521.20px"><svg class="ic" viewBox="0 0 12 12"><path d="M5.100 1.900c-1.900 1.500-2.200 2.700-.8 4 .8.800.6 1.500-.3 2.200 2.200-.9 2.600-2 1.400-3.300-.9-1-.9-1.800-.3-2.900z" fill="#b63c4b" stroke="#b63c4b" stroke-width=".5"/><path d="M2.300 9.500q2.300.9 4.600 0" stroke="#b63c4b" stroke-width="1.200" fill="none"/></svg></span>
<span class="t" style="left:172.66px;top:521.20px;color:#cdd3ee;">SeatRepository.java</span>
<div class="r" style="left:114.67px;top:532.93px;width:1.00px;height:12.63px;background:#42475f;"></div>
<div class="r" style="left:138.80px;top:532.93px;width:1.00px;height:12.63px;background:#42475f;"></div>
<div class="r" style="left:150.86px;top:532.93px;width:1.00px;height:12.63px;background:#42475f;"></div>
<span class="icw" style="left:158.60px;top:533.23px"><svg class="ic" viewBox="0 0 12 12"><path d="M5.100 1.900c-1.900 1.500-2.200 2.700-.8 4 .8.800.6 1.500-.3 2.200 2.200-.9 2.600-2 1.400-3.300-.9-1-.9-1.800-.3-2.900z" fill="#b63c4b" stroke="#b63c4b" stroke-width=".5"/><path d="M2.300 9.500q2.300.9 4.600 0" stroke="#b63c4b" stroke-width="1.200" fill="none"/></svg></span>
<span class="t" style="left:172.66px;top:533.23px;color:#cdd3ee;">ShopApplicationRepository.java</span>
<div class="r" style="left:114.67px;top:544.96px;width:1.00px;height:12.63px;background:#42475f;"></div>
<div class="r" style="left:138.80px;top:544.96px;width:1.00px;height:12.63px;background:#42475f;"></div>
<div class="r" style="left:150.86px;top:544.96px;width:1.00px;height:6.81px;background:#42475f;"></div>
<div class="r" style="left:150.86px;top:550.77px;width:5.43px;height:1.00px;background:#42475f;"></div>
<span class="icw" style="left:158.60px;top:545.26px"><svg class="ic" viewBox="0 0 12 12"><path d="M5.100 1.900c-1.900 1.500-2.200 2.700-.8 4 .8.800.6 1.500-.3 2.200 2.200-.9 2.600-2 1.400-3.300-.9-1-.9-1.800-.3-2.900z" fill="#b63c4b" stroke="#b63c4b" stroke-width=".5"/><path d="M2.300 9.500q2.300.9 4.600 0" stroke="#b63c4b" stroke-width="1.200" fill="none"/></svg></span>
<span class="t" style="left:172.66px;top:545.26px;color:#cdd3ee;">ShopRepository.java</span>
<div class="r" style="left:114.67px;top:556.99px;width:1.00px;height:12.63px;background:#42475f;"></div>
<div class="r" style="left:138.80px;top:556.99px;width:1.00px;height:12.63px;background:#42475f;"></div>
<span class="icw" style="left:146.54px;top:557.29px"><svg class="ic" viewBox="0 0 12 12"><path d="M2.500 9.200V3.500q0-.500.500-.500h2.500l.800 1h2.700q.500 0 .500.500v1" fill="none" stroke="#9bb6ee" stroke-width="1"/><path d="M2.600 9.300l1.400-3.600h6.700l-1.400 3.600z" fill="none" stroke="#9bb6ee" stroke-width="1" stroke-linejoin="round"/></svg></span>
<span class="t" style="left:160.60px;top:557.29px;color:#82a2e4;">service</span>
<div class="r" style="left:114.67px;top:569.02px;width:1.00px;height:12.63px;background:#42475f;"></div>
<div class="r" style="left:138.80px;top:569.02px;width:1.00px;height:12.63px;background:#42475f;"></div>
<div class="r" style="left:150.86px;top:569.02px;width:1.00px;height:12.63px;background:#42475f;"></div>
<span class="icw" style="left:158.60px;top:569.32px"><svg class="ic" viewBox="0 0 12 12"><path d="M5.100 1.900c-1.900 1.500-2.200 2.700-.8 4 .8.800.6 1.500-.3 2.200 2.200-.9 2.600-2 1.400-3.300-.9-1-.9-1.800-.3-2.900z" fill="#b63c4b" stroke="#b63c4b" stroke-width=".5"/><path d="M2.300 9.500q2.300.9 4.600 0" stroke="#b63c4b" stroke-width="1.200" fill="none"/></svg></span>
<span class="t" style="left:172.66px;top:569.32px;color:#cdd3ee;">BarberAssociationService.java</span>
<div class="r" style="left:114.67px;top:581.05px;width:1.00px;height:12.63px;background:#42475f;"></div>
<div class="r" style="left:138.80px;top:581.05px;width:1.00px;height:12.63px;background:#42475f;"></div>
<div class="r" style="left:150.86px;top:581.05px;width:1.00px;height:12.63px;background:#42475f;"></div>
<span class="icw" style="left:158.60px;top:581.35px"><svg class="ic" viewBox="0 0 12 12"><path d="M5.100 1.900c-1.900 1.500-2.200 2.700-.8 4 .8.800.6 1.500-.3 2.200 2.200-.9 2.600-2 1.400-3.300-.9-1-.9-1.800-.3-2.900z" fill="#b63c4b" stroke="#b63c4b" stroke-width=".5"/><path d="M2.300 9.500q2.300.9 4.600 0" stroke="#b63c4b" stroke-width="1.200" fill="none"/></svg></span>
<span class="t" style="left:172.66px;top:581.35px;color:#cdd3ee;">SeatService.java</span>
<div class="r" style="left:114.67px;top:593.08px;width:1.00px;height:12.63px;background:#42475f;"></div>
<div class="r" style="left:138.80px;top:593.08px;width:1.00px;height:12.63px;background:#42475f;"></div>
<div class="r" style="left:150.86px;top:593.08px;width:1.00px;height:12.63px;background:#42475f;"></div>
<span class="icw" style="left:158.60px;top:593.38px"><svg class="ic" viewBox="0 0 12 12"><path d="M5.100 1.900c-1.900 1.500-2.200 2.700-.8 4 .8.800.6 1.500-.3 2.200 2.200-.9 2.600-2 1.400-3.300-.9-1-.9-1.800-.3-2.900z" fill="#b63c4b" stroke="#b63c4b" stroke-width=".5"/><path d="M2.300 9.500q2.300.9 4.600 0" stroke="#b63c4b" stroke-width="1.200" fill="none"/></svg></span>
<span class="t" style="left:172.66px;top:593.38px;color:#cdd3ee;">ShopApplicationService.java</span>
<div class="r" style="left:114.67px;top:605.11px;width:1.00px;height:12.63px;background:#42475f;"></div>
<div class="r" style="left:138.80px;top:605.11px;width:1.00px;height:12.63px;background:#42475f;"></div>
<div class="r" style="left:150.86px;top:605.11px;width:1.00px;height:6.81px;background:#42475f;"></div>
<div class="r" style="left:150.86px;top:610.92px;width:5.43px;height:1.00px;background:#42475f;"></div>
<span class="icw" style="left:158.60px;top:605.41px"><svg class="ic" viewBox="0 0 12 12"><path d="M5.100 1.900c-1.900 1.500-2.200 2.700-.8 4 .8.800.6 1.500-.3 2.200 2.200-.9 2.600-2 1.400-3.300-.9-1-.9-1.800-.3-2.900z" fill="#b63c4b" stroke="#b63c4b" stroke-width=".5"/><path d="M2.300 9.500q2.300.9 4.600 0" stroke="#b63c4b" stroke-width="1.200" fill="none"/></svg></span>
<span class="t" style="left:172.66px;top:605.41px;color:#cdd3ee;">ShopService.java</span>
<div class="r" style="left:114.67px;top:617.14px;width:1.00px;height:12.63px;background:#42475f;"></div>
<div class="r" style="left:138.80px;top:617.14px;width:1.00px;height:6.81px;background:#42475f;"></div>
<div class="r" style="left:138.80px;top:622.95px;width:5.43px;height:1.00px;background:#42475f;"></div>
<span class="icw" style="left:146.54px;top:617.44px"><svg class="ic" viewBox="0 0 12 12"><path d="M2.500 9.200V3.500q0-.500.500-.500h2.500l.800 1h2.700q.500 0 .500.500v1" fill="none" stroke="#9bb6ee" stroke-width="1"/><path d="M2.600 9.300l1.400-3.600h6.700l-1.400 3.600z" fill="none" stroke="#9bb6ee" stroke-width="1" stroke-linejoin="round"/></svg></span>
<span class="t" style="left:160.60px;top:617.44px;color:#82a2e4;">serviceImpl</span>
<div class="r" style="left:114.67px;top:629.17px;width:1.00px;height:12.63px;background:#42475f;"></div>
<div class="r" style="left:150.86px;top:629.17px;width:1.00px;height:12.63px;background:#42475f;"></div>
<span class="icw" style="left:158.60px;top:629.47px"><svg class="ic" viewBox="0 0 12 12"><path d="M5.100 1.900c-1.900 1.500-2.200 2.700-.8 4 .8.800.6 1.500-.3 2.200 2.200-.9 2.600-2 1.400-3.300-.9-1-.9-1.800-.3-2.900z" fill="#b63c4b" stroke="#b63c4b" stroke-width=".5"/><path d="M2.300 9.500q2.300.9 4.600 0" stroke="#b63c4b" stroke-width="1.200" fill="none"/></svg></span>
<span class="t" style="left:172.66px;top:629.47px;color:#cdd3ee;">SeatServiceImpl.java</span>
<div class="r" style="left:114.67px;top:641.20px;width:1.00px;height:12.63px;background:#42475f;"></div>
<div class="r" style="left:150.86px;top:641.20px;width:1.00px;height:12.63px;background:#42475f;"></div>
<span class="icw" style="left:158.60px;top:641.50px"><svg class="ic" viewBox="0 0 12 12"><path d="M5.100 1.900c-1.900 1.500-2.200 2.700-.8 4 .8.800.6 1.500-.3 2.200 2.200-.9 2.600-2 1.400-3.300-.9-1-.9-1.800-.3-2.900z" fill="#b63c4b" stroke="#b63c4b" stroke-width=".5"/><path d="M2.300 9.500q2.300.9 4.600 0" stroke="#b63c4b" stroke-width="1.200" fill="none"/></svg></span>
<span class="t" style="left:172.66px;top:641.50px;color:#cdd3ee;">ShopApplicationServiceImpl.java</span>
<div class="r" style="left:114.67px;top:653.23px;width:1.00px;height:12.63px;background:#42475f;"></div>
<div class="r" style="left:150.86px;top:653.23px;width:1.00px;height:6.81px;background:#42475f;"></div>
<div class="r" style="left:150.86px;top:659.04px;width:5.43px;height:1.00px;background:#42475f;"></div>
<span class="icw" style="left:158.60px;top:653.53px"><svg class="ic" viewBox="0 0 12 12"><path d="M5.100 1.900c-1.900 1.500-2.200 2.700-.8 4 .8.800.6 1.500-.3 2.200 2.200-.9 2.600-2 1.400-3.300-.9-1-.9-1.800-.3-2.900z" fill="#b63c4b" stroke="#b63c4b" stroke-width=".5"/><path d="M2.300 9.500q2.300.9 4.600 0" stroke="#b63c4b" stroke-width="1.200" fill="none"/></svg></span>
<span class="t" style="left:172.66px;top:653.53px;color:#cdd3ee;">ShopServiceImpl.java</span>
<div class="r" style="left:114.67px;top:665.26px;width:1.00px;height:6.81px;background:#42475f;"></div>
<div class="r" style="left:114.67px;top:671.07px;width:5.43px;height:1.00px;background:#42475f;"></div>
<span class="icw" style="left:122.42px;top:665.56px"><svg class="ic" viewBox="0 0 12 12"><path d="M5.100 1.900c-1.900 1.500-2.200 2.700-.8 4 .8.800.6 1.500-.3 2.200 2.200-.9 2.600-2 1.400-3.300-.9-1-.9-1.800-.3-2.900z" fill="#b63c4b" stroke="#b63c4b" stroke-width=".5"/><path d="M2.300 9.500q2.300.9 4.600 0" stroke="#b63c4b" stroke-width="1.200" fill="none"/></svg></span>
<span class="t" style="left:136.48px;top:665.56px;color:#cdd3ee;">BarbershopBackendApplication.java</span>
<div class="r" style="left:66.44px;top:677.59px;width:1.00px;height:6.51px;background:#42475f;"></div>
<div class="r" style="left:66.44px;top:683.10px;width:5.43px;height:1.00px;background:#42475f;"></div>
<span class="icw" style="left:74.18px;top:677.59px"><svg class="ic" viewBox="0 0 12 12"><path d="M2.500 9.200V2.900q0-.500.500-.500h2.600l.900 1.200h3.200q.500 0 .500.500v5.100q0 .500-.500.500H3q-.500 0-.500-.500z" fill="none" stroke="#9bb6ee" stroke-width="1"/></svg></span>
<span class="t" style="left:88.24px;top:677.59px;color:#82a2e4;">resources</span>
<span class="icw" style="left:62.12px;top:689.62px"><svg class="ic" viewBox="0 0 12 12"><path d="M2.500 9.200V2.900q0-.500.500-.500h2.600l.900 1.200h3.200q.500 0 .500.500v5.100q0 .500-.500.500H3q-.500 0-.500-.500z" fill="none" stroke="#9bb6ee" stroke-width="1"/></svg></span>
<span class="t" style="left:76.18px;top:689.62px;color:#82a2e4;">test</span>
<div class="r" style="left:184.72px;top:401.40px;width:6.03px;height:11.03px;background:transparent;border:1px solid #9aa0bd;"></div>
<div class="r" style="left:34.00px;top:701.15px;width:66.30px;height:13.03px;background:#2d3049;"></div>
<span class="t" style="left:40.00px;top:701.65px;color:#a3a7f3;font-weight:bold;">N</span>
<span class="t" style="left:58.09px;top:701.65px;color:#a3a7f3;font-weight:bold;">NORMAL</span>
<span class="t" style="left:106.33px;top:701.65px;color:#9a9eb5;">b/neo-tree filesystem [1]</span>
<span class="icw" style="left:260.11px;top:701.65px"><svg class="ic" viewBox="0 0 12 12"><rect x="2.600" y="5.400" width="6.800" height="4.800" rx=".6" fill="#c9cce0"/><path d="M4 5.500v-1.300a2 2 0 0 1 4 0v1.300" fill="none" stroke="#c9cce0" stroke-width="1.100"/></svg></span>
<span class="icw" style="left:291.26px;top:701.65px"><svg class="ic" viewBox="0 0 12 12"><path d="M2.500 1.500h4.500l2.500 2.500v6.500h-7z" fill="none" stroke="#6b7089" stroke-width="1.100"/><path d="M4 6.200h4M4 8.200h4" stroke="#6b7089" stroke-width=".9"/></svg></span>
<span class="t" style="left:305.32px;top:701.65px;color:#9a9eb5;">neo-tree</span>
<div class="r" style="left:359.59px;top:701.15px;width:48.24px;height:13.03px;background:#2d3049;"></div>
<span class="t" style="left:371.65px;top:701.65px;color:#aaa9f5;font-weight:bold;">35:26</span>
<svg class="r" style="left:36.500px;top:699.500px;width:12.500px;height:12.500px" viewBox="0 0 12 12"><path d="M1 6.200L6 1.500l5 4.700M2.800 5.500v5h2.200v-3h2v3h2.200v-5" fill="none" stroke="#f0407f" stroke-width="1.600"/></svg>
<span class="s" style="left:50px;top:699.300px;font-size:11.500px;line-height:13px;font-weight:bold;color:#f0407f;letter-spacing:-.2px">362</span>
<!--MID-->
<span class="t" style="left:436.00px;top:40.00px;color:#82a2e4;">↳</span>
<span class="t" style="left:448.06px;top:40.00px;color:#cdd3ee;">FRONTEND&lt;</span>
<span class="t" style="left:502.33px;top:40.00px;color:#82a2e4;">arbershop-fronten&gt;</span>
<svg class="r" style="left:611.87px;top:40.00px;width:6px;height:12px" viewBox="0 0 6 12"><path d="M5 0.800L1.200 6 5 11.200" fill="none" stroke="#6d7089" stroke-width=".9"/></svg>
<span class="t" style="left:622.93px;top:40.00px;color:#a39cb0;">07:58 PM | February 28, 2025</span>
<svg class="r" style="left:797.80px;top:40.00px;width:6px;height:12px" viewBox="0 0 6 12"><path d="M1 0.800L4.800 6 1 11.200" fill="none" stroke="#6d7089" stroke-width=".9"/></svg>
<div class="r" style="left:430.00px;top:52.03px;width:78.36px;height:12.03px;background:#2c2f47;"></div>
<span class="icw" style="left:434.00px;top:52.03px"><svg class="ic" viewBox="0 0 12 12"><path d="M2.500 1.500h4.500l2.500 2.500v6.500h-7z" fill="none" stroke="#c58af0" stroke-width="1.100"/><path d="M4 6.200h4M4 8.200h4" stroke="#c58af0" stroke-width=".9"/></svg></span>
<span class="t" style="left:448.06px;top:52.03px;color:#b9a3ee;">[No Name]</span>
<div class="r" style="left:713.38px;top:52.03px;width:90.45px;height:12.03px;background:#2c2f47;"></div>
<span class="icw" style="left:718.41px;top:52.03px"><svg class="ic" viewBox="0 0 12 12"><path d="M6 1.800a4.200 4.200 0 0 0-1.400 8.200v-1.600q-1.600.3-1.900-.9.900.1 1.300.8.500.5 1.200.1.100-.5.400-.8-2.200-.3-2.200-2.300 0-.8.500-1.400-.2-.7.100-1.300.700 0 1.400.6 1.200-.3 2.400 0 .700-.6 1.400-.6.300.6.100 1.300.5.600.5 1.400 0 2-2.200 2.300.4.400.4 1.100v1.500a4.200 4.200 0 0 0-2-8.400z" fill="#5f6582"/></svg></span>
<span class="t" style="left:731.47px;top:52.03px;color:#5f6582;">development</span>
<div class="r" style="left:430.00px;top:352.78px;width:277.35px;height:12.03px;background:#282b41;"></div>
<div class="r" style="left:707.35px;top:64.06px;width:6.03px;height:565.41px;background:#191b29;"></div>
<div class="r" style="left:715.89px;top:64.06px;width:1.00px;height:637.59px;background:#3a3e57;"></div>
<div class="r" style="left:709.15px;top:309.66px;width:2.20px;height:2.20px;background:#e8e8f0;border-radius:50%;"></div>
<span class="t" style="left:719.41px;top:64.06px;color:#3a3f5a;">1</span>
<div class="r" style="left:743.53px;top:64.56px;width:6.03px;height:11.03px;background:transparent;border:1px solid #b9bdd6;"></div>
<div class="r" style="left:799.60px;top:69.06px;width:2.20px;height:2.20px;background:#e8e8f0;border-radius:50%;"></div>
<span class="icw" style="left:434.00px;top:64.06px"><svg class="ic" viewBox="0 0 12 12"><path d="M2.500 9.200V3.500q0-.500.500-.500h2.500l.800 1h2.700q.500 0 .500.500v1" fill="none" stroke="#9bb6ee" stroke-width="1"/><path d="M2.600 9.300l1.400-3.600h6.700l-1.400 3.600z" fill="none" stroke="#9bb6ee" stroke-width="1" stroke-linejoin="round"/></svg></span>
<span class="t" style="left:448.06px;top:64.06px;color:#82a2e4;font-weight:bold;">~/desk/repository/barbershop-frontend</span>
<span class="icw" style="left:446.06px;top:76.09px"><svg class="ic" viewBox="0 0 12 12"><path d="M2.500 9.200V2.900q0-.500.500-.500h2.600l.900 1.200h3.200q.500 0 .500.500v5.100q0 .500-.500.500H3q-.500 0-.500-.500z" fill="none" stroke="#9bb6ee" stroke-width="1"/></svg></span>
<span class="t" style="left:460.12px;top:76.09px;color:#82a2e4;">public</span>
<span class="icw" style="left:446.06px;top:88.12px"><svg class="ic" viewBox="0 0 12 12"><path d="M2.500 9.200V3.500q0-.500.500-.500h2.500l.800 1h2.700q.500 0 .500.500v1" fill="none" stroke="#9bb6ee" stroke-width="1"/><path d="M2.600 9.300l1.400-3.600h6.700l-1.400 3.600z" fill="none" stroke="#9bb6ee" stroke-width="1" stroke-linejoin="round"/></svg></span>
<span class="t" style="left:460.12px;top:88.12px;color:#82a2e4;">src</span>
<div class="r" style="left:450.38px;top:99.85px;width:1.00px;height:12.63px;background:#42475f;"></div>
<span class="icw" style="left:458.12px;top:100.15px"><svg class="ic" viewBox="0 0 12 12"><path d="M2.500 9.200V3.500q0-.500.500-.500h2.500l.800 1h2.700q.500 0 .500.500v1" fill="none" stroke="#9bb6ee" stroke-width="1"/><path d="M2.600 9.300l1.400-3.600h6.700l-1.400 3.600z" fill="none" stroke="#9bb6ee" stroke-width="1" stroke-linejoin="round"/></svg></span>
<span class="t" style="left:472.18px;top:100.15px;color:#82a2e4;">app</span>
<div class="r" style="left:450.38px;top:111.88px;width:1.00px;height:12.63px;background:#42475f;"></div>
<div class="r" style="left:462.44px;top:111.88px;width:1.00px;height:12.63px;background:#42475f;"></div>
<span class="icw" style="left:470.18px;top:112.18px"><svg class="ic" viewBox="0 0 12 12"><path d="M2.500 9.200V3.500q0-.500.500-.500h2.500l.800 1h2.700q.500 0 .500.500v1" fill="none" stroke="#9bb6ee" stroke-width="1"/><path d="M2.600 9.300l1.400-3.600h6.700l-1.400 3.600z" fill="none" stroke="#9bb6ee" stroke-width="1" stroke-linejoin="round"/></svg></span>
<span class="t" style="left:484.24px;top:112.18px;color:#82a2e4;">(auth)</span>
<div class="r" style="left:450.38px;top:123.91px;width:1.00px;height:12.63px;background:#42475f;"></div>
<div class="r" style="left:462.44px;top:123.91px;width:1.00px;height:12.63px;background:#42475f;"></div>
<div class="r" style="left:474.50px;top:123.91px;width:1.00px;height:12.63px;background:#42475f;"></div>
<span class="icw" style="left:482.24px;top:124.21px"><svg class="ic" viewBox="0 0 12 12"><path d="M2.500 9.200V3.500q0-.500.500-.500h2.500l.800 1h2.700q.500 0 .500.500v1" fill="none" stroke="#9bb6ee" stroke-width="1"/><path d="M2.600 9.300l1.400-3.600h6.700l-1.400 3.600z" fill="none" stroke="#9bb6ee" stroke-width="1" stroke-linejoin="round"/></svg></span>
<span class="t" style="left:496.30px;top:124.21px;color:#82a2e4;">login</span>
<div class="r" style="left:450.38px;top:135.94px;width:1.00px;height:12.63px;background:#42475f;"></div>
<div class="r" style="left:462.44px;top:135.94px;width:1.00px;height:12.63px;background:#42475f;"></div>
<div class="r" style="left:474.50px;top:135.94px;width:1.00px;height:12.63px;background:#42475f;"></div>
<div class="r" style="left:486.56px;top:135.94px;width:1.00px;height:6.81px;background:#42475f;"></div>
<div class="r" style="left:486.56px;top:141.75px;width:5.43px;height:1.00px;background:#42475f;"></div>
<span class="icw" style="left:494.30px;top:136.24px"><svg class="ic" viewBox="0 0 12 12"><circle cx="5.600" cy="6.100" r="3.300" fill="#2f63c4"/><circle cx="5.600" cy="6.100" r="1" fill="#2a4f9c"/></svg></span>
<span class="t" style="left:508.36px;top:136.24px;color:#cdd3ee;">page.tsx</span>
<div class="r" style="left:450.38px;top:147.97px;width:1.00px;height:12.63px;background:#42475f;"></div>
<div class="r" style="left:462.44px;top:147.97px;width:1.00px;height:12.63px;background:#42475f;"></div>
<div class="r" style="left:474.50px;top:147.97px;width:1.00px;height:6.81px;background:#42475f;"></div>
<div class="r" style="left:474.50px;top:153.78px;width:5.43px;height:1.00px;background:#42475f;"></div>
<span class="icw" style="left:482.24px;top:148.27px"><svg class="ic" viewBox="0 0 12 12"><path d="M2.500 9.200V3.500q0-.500.500-.500h2.500l.800 1h2.700q.500 0 .500.500v1" fill="none" stroke="#9bb6ee" stroke-width="1"/><path d="M2.600 9.300l1.400-3.600h6.700l-1.400 3.600z" fill="none" stroke="#9bb6ee" stroke-width="1" stroke-linejoin="round"/></svg></span>
<span class="t" style="left:496.30px;top:148.27px;color:#82a2e4;">signup</span>
<div class="r" style="left:450.38px;top:160.00px;width:1.00px;height:12.63px;background:#42475f;"></div>
<div class="r" style="left:462.44px;top:160.00px;width:1.00px;height:12.63px;background:#42475f;"></div>
<div class="r" style="left:486.56px;top:160.00px;width:1.00px;height:6.81px;background:#42475f;"></div>
<div class="r" style="left:486.56px;top:165.81px;width:5.43px;height:1.00px;background:#42475f;"></div>
<span class="icw" style="left:494.30px;top:160.30px"><svg class="ic" viewBox="0 0 12 12"><circle cx="5.600" cy="6.100" r="3.300" fill="#2f63c4"/><circle cx="5.600" cy="6.100" r="1" fill="#2a4f9c"/></svg></span>
<span class="t" style="left:508.36px;top:160.30px;color:#cdd3ee;">page.tsx</span>
<div class="r" style="left:450.38px;top:172.03px;width:1.00px;height:12.63px;background:#42475f;"></div>
<div class="r" style="left:462.44px;top:172.03px;width:1.00px;height:12.63px;background:#42475f;"></div>
<span class="icw" style="left:470.18px;top:172.33px"><svg class="ic" viewBox="0 0 12 12"><path d="M2.500 9.200V2.900q0-.500.500-.500h2.600l.900 1.200h3.200q.500 0 .500.500v5.100q0 .500-.500.500H3q-.500 0-.500-.500z" fill="none" stroke="#9bb6ee" stroke-width="1"/></svg></span>
<span class="t" style="left:484.24px;top:172.33px;color:#82a2e4;">barbers</span>
<div class="r" style="left:450.38px;top:184.06px;width:1.00px;height:12.63px;background:#42475f;"></div>
<div class="r" style="left:462.44px;top:184.06px;width:1.00px;height:12.63px;background:#42475f;"></div>
<span class="icw" style="left:470.18px;top:184.36px"><svg class="ic" viewBox="0 0 12 12"><path d="M2.500 9.200V2.900q0-.500.500-.500h2.600l.900 1.200h3.200q.500 0 .500.500v5.100q0 .500-.500.500H3q-.500 0-.500-.500z" fill="none" stroke="#9bb6ee" stroke-width="1"/></svg></span>
<span class="t" style="left:484.24px;top:184.36px;color:#82a2e4;">customers</span>
<div class="r" style="left:450.38px;top:196.09px;width:1.00px;height:12.63px;background:#42475f;"></div>
<div class="r" style="left:462.44px;top:196.09px;width:1.00px;height:12.63px;background:#42475f;"></div>
<span class="icw" style="left:470.18px;top:196.39px"><svg class="ic" viewBox="0 0 12 12"><path d="M2.500 9.200V3.500q0-.500.500-.500h2.500l.800 1h2.700q.500 0 .500.500v1" fill="none" stroke="#9bb6ee" stroke-width="1"/><path d="M2.600 9.300l1.400-3.600h6.700l-1.400 3.600z" fill="none" stroke="#9bb6ee" stroke-width="1" stroke-linejoin="round"/></svg></span>
<span class="t" style="left:484.24px;top:196.39px;color:#82a2e4;">owners</span>
<div class="r" style="left:450.38px;top:208.12px;width:1.00px;height:12.63px;background:#42475f;"></div>
<div class="r" style="left:462.44px;top:208.12px;width:1.00px;height:12.63px;background:#42475f;"></div>
<div class="r" style="left:474.50px;top:208.12px;width:1.00px;height:12.63px;background:#42475f;"></div>
<span class="icw" style="left:482.24px;top:208.42px"><svg class="ic" viewBox="0 0 12 12"><path d="M2.500 9.200V3.500q0-.500.500-.500h2.500l.800 1h2.700q.500 0 .500.500v1" fill="none" stroke="#9bb6ee" stroke-width="1"/><path d="M2.600 9.300l1.400-3.600h6.700l-1.400 3.600z" fill="none" stroke="#9bb6ee" stroke-width="1" stroke-linejoin="round"/></svg></span>
<span class="t" style="left:496.30px;top:208.42px;color:#82a2e4;">dashboard</span>
<div class="r" style="left:450.38px;top:220.15px;width:1.00px;height:12.63px;background:#42475f;"></div>
<div class="r" style="left:462.44px;top:220.15px;width:1.00px;height:12.63px;background:#42475f;"></div>
<div class="r" style="left:474.50px;top:220.15px;width:1.00px;height:12.63px;background:#42475f;"></div>
<div class="r" style="left:486.56px;top:220.15px;width:1.00px;height:6.81px;background:#42475f;"></div>
<div class="r" style="left:486.56px;top:225.96px;width:5.43px;height:1.00px;background:#42475f;"></div>
<span class="icw" style="left:494.30px;top:220.45px"><svg class="ic" viewBox="0 0 12 12"><circle cx="5.600" cy="6.100" r="3.300" fill="#2f63c4"/><circle cx="5.600" cy="6.100" r="1" fill="#2a4f9c"/></svg></span>
<span class="t" style="left:508.36px;top:220.45px;color:#cdd3ee;">page.tsx</span>
<div class="r" style="left:450.38px;top:232.18px;width:1.00px;height:12.63px;background:#42475f;"></div>
<div class="r" style="left:462.44px;top:232.18px;width:1.00px;height:12.63px;background:#42475f;"></div>
<div class="r" style="left:474.50px;top:232.18px;width:1.00px;height:12.63px;background:#42475f;"></div>
<span class="icw" style="left:482.24px;top:232.48px"><svg class="ic" viewBox="0 0 12 12"><path d="M2.500 9.200V3.500q0-.500.500-.500h2.500l.800 1h2.700q.500 0 .500.500v1" fill="none" stroke="#9bb6ee" stroke-width="1"/><path d="M2.600 9.300l1.400-3.600h6.700l-1.400 3.600z" fill="none" stroke="#9bb6ee" stroke-width="1" stroke-linejoin="round"/></svg></span>
<span class="t" style="left:496.30px;top:232.48px;color:#82a2e4;">my-shops</span>
<div class="r" style="left:450.38px;top:244.21px;width:1.00px;height:12.63px;background:#42475f;"></div>
<div class="r" style="left:462.44px;top:244.21px;width:1.00px;height:12.63px;background:#42475f;"></div>
<div class="r" style="left:474.50px;top:244.21px;width:1.00px;height:12.63px;background:#42475f;"></div>
<div class="r" style="left:486.56px;top:244.21px;width:1.00px;height:6.81px;background:#42475f;"></div>
<div class="r" style="left:486.56px;top:250.02px;width:5.43px;height:1.00px;background:#42475f;"></div>
<span class="icw" style="left:494.30px;top:244.51px"><svg class="ic" viewBox="0 0 12 12"><circle cx="5.600" cy="6.100" r="3.300" fill="#2f63c4"/><circle cx="5.600" cy="6.100" r="1" fill="#2a4f9c"/></svg></span>
<span class="t" style="left:508.36px;top:244.51px;color:#cdd3ee;">page.tsx</span>
<div class="r" style="left:450.38px;top:256.24px;width:1.00px;height:12.63px;background:#42475f;"></div>
<div class="r" style="left:462.44px;top:256.24px;width:1.00px;height:12.63px;background:#42475f;"></div>
<div class="r" style="left:474.50px;top:256.24px;width:1.00px;height:6.81px;background:#42475f;"></div>
<div class="r" style="left:474.50px;top:262.05px;width:5.43px;height:1.00px;background:#42475f;"></div>
<span class="icw" style="left:482.24px;top:256.54px"><svg class="ic" viewBox="0 0 12 12"><path d="M2.500 9.200V3.500q0-.500.500-.500h2.500l.800 1h2.700q.500 0 .500.500v1" fill="none" stroke="#9bb6ee" stroke-width="1"/><path d="M2.600 9.300l1.400-3.600h6.700l-1.400 3.600z" fill="none" stroke="#9bb6ee" stroke-width="1" stroke-linejoin="round"/></svg></span>
<span class="t" style="left:496.30px;top:256.54px;color:#82a2e4;">profile</span>
<div class="r" style="left:450.38px;top:268.27px;width:1.00px;height:12.63px;background:#42475f;"></div>
<div class="r" style="left:462.44px;top:268.27px;width:1.00px;height:12.63px;background:#42475f;"></div>
<div class="r" style="left:486.56px;top:268.27px;width:1.00px;height:12.63px;background:#42475f;"></div>
<span class="icw" style="left:494.30px;top:268.57px"><svg class="ic" viewBox="0 0 12 12"><path d="M2.500 9.200V3.500q0-.500.500-.500h2.500l.800 1h2.700q.500 0 .500.500v1" fill="none" stroke="#9bb6ee" stroke-width="1"/><path d="M2.600 9.300l1.400-3.600h6.700l-1.400 3.600z" fill="none" stroke="#9bb6ee" stroke-width="1" stroke-linejoin="round"/></svg></span>
<span class="t" style="left:508.36px;top:268.57px;color:#82a2e4;">create</span>
<div class="r" style="left:450.38px;top:280.30px;width:1.00px;height:12.63px;background:#42475f;"></div>
<div class="r" style="left:462.44px;top:280.30px;width:1.00px;height:12.63px;background:#42475f;"></div>
<div class="r" style="left:486.56px;top:280.30px;width:1.00px;height:12.63px;background:#42475f;"></div>
<div class="r" style="left:498.62px;top:280.30px;width:1.00px;height:6.81px;background:#42475f;"></div>
<div class="r" style="left:498.62px;top:286.12px;width:5.43px;height:1.00px;background:#42475f;"></div>
<span class="icw" style="left:506.36px;top:280.60px"><svg class="ic" viewBox="0 0 12 12"><circle cx="5.600" cy="6.100" r="3.300" fill="#2f63c4"/><circle cx="5.600" cy="6.100" r="1" fill="#2a4f9c"/></svg></span>
<span class="t" style="left:520.42px;top:280.60px;color:#cdd3ee;">page.tsx</span>
<div class="r" style="left:450.38px;top:292.33px;width:1.00px;height:12.63px;background:#42475f;"></div>
<div class="r" style="left:462.44px;top:292.33px;width:1.00px;height:12.63px;background:#42475f;"></div>
<div class="r" style="left:486.56px;top:292.33px;width:1.00px;height:6.81px;background:#42475f;"></div>
<div class="r" style="left:486.56px;top:298.14px;width:5.43px;height:1.00px;background:#42475f;"></div>
<span class="icw" style="left:494.30px;top:292.63px"><svg class="ic" viewBox="0 0 12 12"><path d="M2.500 9.200V3.500q0-.500.500-.500h2.500l.800 1h2.700q.500 0 .500.500v1" fill="none" stroke="#9bb6ee" stroke-width="1"/><path d="M2.600 9.300l1.400-3.600h6.700l-1.400 3.600z" fill="none" stroke="#9bb6ee" stroke-width="1" stroke-linejoin="round"/></svg></span>
<span class="t" style="left:508.36px;top:292.63px;color:#82a2e4;">edit</span>
<div class="r" style="left:450.38px;top:304.36px;width:1.00px;height:12.63px;background:#42475f;"></div>
<div class="r" style="left:462.44px;top:304.36px;width:1.00px;height:12.63px;background:#42475f;"></div>
<div class="r" style="left:498.62px;top:304.36px;width:1.00px;height:6.81px;background:#42475f;"></div>
<div class="r" style="left:498.62px;top:310.17px;width:5.43px;height:1.00px;background:#42475f;"></div>
<span class="icw" style="left:506.36px;top:304.66px"><svg class="ic" viewBox="0 0 12 12"><circle cx="5.600" cy="6.100" r="3.300" fill="#2f63c4"/><circle cx="5.600" cy="6.100" r="1" fill="#2a4f9c"/></svg></span>
<span class="t" style="left:520.42px;top:304.66px;color:#cdd3ee;">page.tsx</span>
<div class="r" style="left:450.38px;top:316.39px;width:1.00px;height:12.63px;background:#42475f;"></div>
<div class="r" style="left:462.44px;top:316.39px;width:1.00px;height:12.63px;background:#42475f;"></div>
<span class="icw" style="left:470.18px;top:316.69px"><svg class="ic" viewBox="0 0 12 12"><path d="M2.500 9.200V2.900q0-.500.500-.500h2.600l.900 1.200h3.200q.500 0 .500.500v5.100q0 .500-.500.500H3q-.500 0-.500-.500z" fill="none" stroke="#9bb6ee" stroke-width="1"/></svg></span>
<span class="t" style="left:484.24px;top:316.69px;color:#82a2e4;">shops</span>
<div class="r" style="left:450.38px;top:328.42px;width:1.00px;height:12.63px;background:#42475f;"></div>
<div class="r" style="left:462.44px;top:328.42px;width:1.00px;height:12.63px;background:#42475f;"></div>
<span class="icw" style="left:470.18px;top:328.72px"><svg class="ic" viewBox="0 0 12 12"><path d="M6 1.6l1.4 2.9 3.2.4-2.3 2.2.6 3.2L6 8.8l-2.9 1.5.6-3.2L1.400 4.900l3.200-.4z" fill="#e6c24a"/></svg></span>
<span class="t" style="left:484.24px;top:328.72px;color:#cdd3ee;">favicon.ico</span>
<div class="r" style="left:450.38px;top:340.45px;width:1.00px;height:12.63px;background:#42475f;"></div>
<div class="r" style="left:462.44px;top:340.45px;width:1.00px;height:12.63px;background:#42475f;"></div>
<span class="icw" style="left:470.18px;top:340.75px"><svg class="ic" viewBox="0 0 12 12"><path d="M2.100 2.200h6.800l-.6 7L5.500 10.200l-2.800-1z" fill="#4d94e8"/><path d="M3.700 4.100h3.600M3.900 6h3.200M4.100 7.900h2.800" stroke="#1e2132" stroke-width=".8"/></svg></span>
<span class="t" style="left:484.24px;top:340.75px;color:#cdd3ee;">globals.css</span>
<div class="r" style="left:450.38px;top:352.48px;width:1.00px;height:12.63px;background:#42475f;"></div>
<div class="r" style="left:462.44px;top:352.48px;width:1.00px;height:12.63px;background:#42475f;"></div>
<span class="icw" style="left:470.18px;top:352.78px"><svg class="ic" viewBox="0 0 12 12"><circle cx="5.600" cy="6.100" r="3.300" fill="#2f63c4"/><circle cx="5.600" cy="6.100" r="1" fill="#2a4f9c"/></svg></span>
<span class="t" style="left:484.24px;top:352.78px;color:#cdd3ee;">layout.tsx</span>
<div class="r" style="left:450.38px;top:364.51px;width:1.00px;height:12.63px;background:#42475f;"></div>
<div class="r" style="left:462.44px;top:364.51px;width:1.00px;height:12.63px;background:#42475f;"></div>
<span class="icw" style="left:470.18px;top:364.81px"><svg class="ic" viewBox="0 0 12 12"><circle cx="5.600" cy="6.100" r="3.300" fill="#2f63c4"/><circle cx="5.600" cy="6.100" r="1" fill="#2a4f9c"/></svg></span>
<span class="t" style="left:484.24px;top:364.81px;color:#cdd3ee;">page.tsx</span>
<div class="r" style="left:450.38px;top:376.54px;width:1.00px;height:12.63px;background:#42475f;"></div>
<div class="r" style="left:462.44px;top:376.54px;width:1.00px;height:6.81px;background:#42475f;"></div>
<div class="r" style="left:462.44px;top:382.35px;width:5.43px;height:1.00px;background:#42475f;"></div>
<span class="icw" style="left:470.18px;top:376.84px"><svg class="ic" viewBox="0 0 12 12"><circle cx="5.600" cy="6.100" r="3.300" fill="#2f63c4"/><circle cx="5.600" cy="6.100" r="1" fill="#2a4f9c"/></svg></span>
<span class="t" style="left:484.24px;top:376.84px;color:#cdd3ee;">providers.tsx</span>
<div class="r" style="left:450.38px;top:388.57px;width:1.00px;height:12.63px;background:#42475f;"></div>
<span class="icw" style="left:458.12px;top:388.87px"><svg class="ic" viewBox="0 0 12 12"><path d="M2.500 9.200V2.900q0-.500.500-.500h2.600l.900 1.200h3.200q.500 0 .500.500v5.100q0 .500-.500.500H3q-.500 0-.500-.500z" fill="none" stroke="#9bb6ee" stroke-width="1"/></svg></span>
<span class="t" style="left:472.18px;top:388.87px;color:#82a2e4;">lib</span>
<div class="r" style="left:450.38px;top:400.60px;width:1.00px;height:12.63px;background:#42475f;"></div>
<span class="icw" style="left:458.12px;top:400.90px"><svg class="ic" viewBox="0 0 12 12"><path d="M2.500 9.200V3.500q0-.500.500-.500h2.500l.800 1h2.700q.500 0 .500.500v1" fill="none" stroke="#9bb6ee" stroke-width="1"/><path d="M2.600 9.300l1.400-3.600h6.700l-1.400 3.600z" fill="none" stroke="#9bb6ee" stroke-width="1" stroke-linejoin="round"/></svg></span>
<span class="t" style="left:472.18px;top:400.90px;color:#82a2e4;">modules</span>
<div class="r" style="left:450.38px;top:412.63px;width:1.00px;height:12.63px;background:#42475f;"></div>
<div class="r" style="left:462.44px;top:412.63px;width:1.00px;height:12.63px;background:#42475f;"></div>
<span class="icw" style="left:470.18px;top:412.93px"><svg class="ic" viewBox="0 0 12 12"><path d="M2.500 9.200V3.500q0-.500.500-.500h2.500l.800 1h2.700q.500 0 .500.500v1" fill="none" stroke="#9bb6ee" stroke-width="1"/><path d="M2.600 9.300l1.400-3.600h6.700l-1.400 3.600z" fill="none" stroke="#9bb6ee" stroke-width="1" stroke-linejoin="round"/></svg></span>
<span class="t" style="left:484.24px;top:412.93px;color:#82a2e4;">auth</span>
<div class="r" style="left:450.38px;top:424.66px;width:1.00px;height:12.63px;background:#42475f;"></div>
<div class="r" style="left:462.44px;top:424.66px;width:1.00px;height:12.63px;background:#42475f;"></div>
<div class="r" style="left:474.50px;top:424.66px;width:1.00px;height:12.63px;background:#42475f;"></div>
<span class="icw" style="left:482.24px;top:424.96px"><svg class="ic" viewBox="0 0 12 12"><path d="M2.500 9.200V3.500q0-.500.500-.500h2.500l.800 1h2.700q.500 0 .500.500v1" fill="none" stroke="#9bb6ee" stroke-width="1"/><path d="M2.600 9.300l1.400-3.600h6.700l-1.400 3.600z" fill="none" stroke="#9bb6ee" stroke-width="1" stroke-linejoin="round"/></svg></span>
<span class="t" style="left:496.30px;top:424.96px;color:#82a2e4;">services</span>
<div class="r" style="left:450.38px;top:436.69px;width:1.00px;height:12.63px;background:#42475f;"></div>
<div class="r" style="left:462.44px;top:436.69px;width:1.00px;height:12.63px;background:#42475f;"></div>
<div class="r" style="left:474.50px;top:436.69px;width:1.00px;height:12.63px;background:#42475f;"></div>
<div class="r" style="left:486.56px;top:436.69px;width:1.00px;height:12.63px;background:#42475f;"></div>
<span class="icw" style="left:494.30px;top:436.99px"><span class="tsi" style="color:#3f9dbd">TS</span></span>
<span class="t" style="left:508.36px;top:436.99px;color:#cdd3ee;">auth.service.ts</span>
<div class="r" style="left:450.38px;top:448.72px;width:1.00px;height:12.63px;background:#42475f;"></div>
<div class="r" style="left:462.44px;top:448.72px;width:1.00px;height:12.63px;background:#42475f;"></div>
<div class="r" style="left:474.50px;top:448.72px;width:1.00px;height:12.63px;background:#42475f;"></div>
<div class="r" style="left:486.56px;top:448.72px;width:1.00px;height:6.81px;background:#42475f;"></div>
<div class="r" style="left:486.56px;top:454.53px;width:5.43px;height:1.00px;background:#42475f;"></div>
<span class="icw" style="left:494.30px;top:449.02px"><span class="tsi" style="color:#3f9dbd">TS</span></span>
<span class="t" style="left:508.36px;top:449.02px;color:#cdd3ee;">user.service.ts</span>
<div class="r" style="left:450.38px;top:460.75px;width:1.00px;height:12.63px;background:#42475f;"></div>
<div class="r" style="left:462.44px;top:460.75px;width:1.00px;height:12.63px;background:#42475f;"></div>
<div class="r" style="left:474.50px;top:460.75px;width:1.00px;height:6.81px;background:#42475f;"></div>
<div class="r" style="left:474.50px;top:466.56px;width:5.43px;height:1.00px;background:#42475f;"></div>
<span class="icw" style="left:482.24px;top:461.05px"><svg class="ic" viewBox="0 0 12 12"><path d="M2.500 9.200V3.500q0-.500.500-.500h2.500l.800 1h2.700q.500 0 .500.500v1" fill="none" stroke="#9bb6ee" stroke-width="1"/><path d="M2.600 9.300l1.400-3.600h6.700l-1.400 3.600z" fill="none" stroke="#9bb6ee" stroke-width="1" stroke-linejoin="round"/></svg></span>
<span class="t" style="left:496.30px;top:461.05px;color:#82a2e4;">types</span>
<div class="r" style="left:450.38px;top:472.78px;width:1.00px;height:12.63px;background:#42475f;"></div>
<div class="r" style="left:462.44px;top:472.78px;width:1.00px;height:12.63px;background:#42475f;"></div>
<div class="r" style="left:486.56px;top:472.78px;width:1.00px;height:6.81px;background:#42475f;"></div>
<div class="r" style="left:486.56px;top:478.59px;width:5.43px;height:1.00px;background:#42475f;"></div>
<span class="icw" style="left:494.30px;top:473.08px"><span class="tsi" style="color:#3f9dbd">TS</span></span>
<span class="t" style="left:508.36px;top:473.08px;color:#cdd3ee;">auth.types.ts</span>
<div class="r" style="left:450.38px;top:484.81px;width:1.00px;height:12.63px;background:#42475f;"></div>
<div class="r" style="left:462.44px;top:484.81px;width:1.00px;height:12.63px;background:#42475f;"></div>
<span class="icw" style="left:470.18px;top:485.11px"><svg class="ic" viewBox="0 0 12 12"><path d="M2.500 9.200V2.900q0-.500.500-.500h2.600l.900 1.200h3.200q.500 0 .500.500v5.100q0 .500-.500.500H3q-.500 0-.500-.500z" fill="none" stroke="#9bb6ee" stroke-width="1"/></svg></span>
<span class="t" style="left:484.24px;top:485.11px;color:#82a2e4;">barber</span>
<div class="r" style="left:450.38px;top:496.84px;width:1.00px;height:12.63px;background:#42475f;"></div>
<div class="r" style="left:462.44px;top:496.84px;width:1.00px;height:12.63px;background:#42475f;"></div>
<span class="icw" style="left:470.18px;top:497.14px"><svg class="ic" viewBox="0 0 12 12"><path d="M2.500 9.200V2.900q0-.500.500-.500h2.600l.900 1.200h3.200q.500 0 .500.500v5.100q0 .500-.500.500H3q-.500 0-.500-.500z" fill="none" stroke="#9bb6ee" stroke-width="1"/></svg></span>
<span class="t" style="left:484.24px;top:497.14px;color:#82a2e4;">customer</span>
<div class="r" style="left:450.38px;top:508.87px;width:1.00px;height:12.63px;background:#42475f;"></div>
<div class="r" style="left:462.44px;top:508.87px;width:1.00px;height:12.63px;background:#42475f;"></div>
<span class="icw" style="left:470.18px;top:509.17px"><svg class="ic" viewBox="0 0 12 12"><path d="M2.500 9.200V3.500q0-.500.500-.500h2.500l.800 1h2.700q.500 0 .500.500v1" fill="none" stroke="#9bb6ee" stroke-width="1"/><path d="M2.600 9.300l1.400-3.600h6.700l-1.400 3.600z" fill="none" stroke="#9bb6ee" stroke-width="1" stroke-linejoin="round"/></svg></span>
<span class="t" style="left:484.24px;top:509.17px;color:#82a2e4;">owner</span>
<div class="r" style="left:450.38px;top:520.90px;width:1.00px;height:12.63px;background:#42475f;"></div>
<div class="r" style="left:462.44px;top:520.90px;width:1.00px;height:12.63px;background:#42475f;"></div>
<div class="r" style="left:474.50px;top:520.90px;width:1.00px;height:12.63px;background:#42475f;"></div>
<span class="icw" style="left:482.24px;top:521.20px"><svg class="ic" viewBox="0 0 12 12"><path d="M2.500 9.200V3.500q0-.500.500-.500h2.500l.800 1h2.700q.500 0 .500.500v1" fill="none" stroke="#9bb6ee" stroke-width="1"/><path d="M2.600 9.300l1.400-3.600h6.700l-1.400 3.600z" fill="none" stroke="#9bb6ee" stroke-width="1" stroke-linejoin="round"/></svg></span>
<span class="t" style="left:496.30px;top:521.20px;color:#82a2e4;">services</span>
<div class="r" style="left:450.38px;top:532.93px;width:1.00px;height:12.63px;background:#42475f;"></div>
<div class="r" style="left:462.44px;top:532.93px;width:1.00px;height:12.63px;background:#42475f;"></div>
<div class="r" style="left:474.50px;top:532.93px;width:1.00px;height:12.63px;background:#42475f;"></div>
<div class="r" style="left:486.56px;top:532.93px;width:1.00px;height:12.63px;background:#42475f;"></div>
<span class="icw" style="left:494.30px;top:533.23px"><span class="tsi" style="color:#3f9dbd">TS</span></span>
<span class="t" style="left:508.36px;top:533.23px;color:#cdd3ee;">index.ts</span>
<div class="r" style="left:450.38px;top:544.96px;width:1.00px;height:12.63px;background:#42475f;"></div>
<div class="r" style="left:462.44px;top:544.96px;width:1.00px;height:12.63px;background:#42475f;"></div>
<div class="r" style="left:474.50px;top:544.96px;width:1.00px;height:12.63px;background:#42475f;"></div>
<div class="r" style="left:486.56px;top:544.96px;width:1.00px;height:12.63px;background:#42475f;"></div>
<span class="icw" style="left:494.30px;top:545.26px"><span class="tsi" style="color:#3f9dbd">TS</span></span>
<span class="t" style="left:508.36px;top:545.26px;color:#cdd3ee;">owner.service.impl.ts</span>
<div class="r" style="left:450.38px;top:556.99px;width:1.00px;height:12.63px;background:#42475f;"></div>
<div class="r" style="left:462.44px;top:556.99px;width:1.00px;height:12.63px;background:#42475f;"></div>
<div class="r" style="left:474.50px;top:556.99px;width:1.00px;height:12.63px;background:#42475f;"></div>
<div class="r" style="left:486.56px;top:556.99px;width:1.00px;height:6.81px;background:#42475f;"></div>
<div class="r" style="left:486.56px;top:562.80px;width:5.43px;height:1.00px;background:#42475f;"></div>
<span class="icw" style="left:494.30px;top:557.29px"><span class="tsi" style="color:#3f9dbd">TS</span></span>
<span class="t" style="left:508.36px;top:557.29px;color:#cdd3ee;">owner.service.ts</span>
<div class="r" style="left:450.38px;top:569.02px;width:1.00px;height:12.63px;background:#42475f;"></div>
<div class="r" style="left:462.44px;top:569.02px;width:1.00px;height:12.63px;background:#42475f;"></div>
<div class="r" style="left:474.50px;top:569.02px;width:1.00px;height:6.81px;background:#42475f;"></div>
<div class="r" style="left:474.50px;top:574.83px;width:5.43px;height:1.00px;background:#42475f;"></div>
<span class="icw" style="left:482.24px;top:569.32px"><svg class="ic" viewBox="0 0 12 12"><path d="M2.500 9.200V3.500q0-.500.500-.500h2.500l.800 1h2.700q.500 0 .500.500v1" fill="none" stroke="#9bb6ee" stroke-width="1"/><path d="M2.600 9.300l1.400-3.600h6.700l-1.400 3.600z" fill="none" stroke="#9bb6ee" stroke-width="1" stroke-linejoin="round"/></svg></span>
<span class="t" style="left:496.30px;top:569.32px;color:#82a2e4;">types</span>
<div class="r" style="left:450.38px;top:581.05px;width:1.00px;height:12.63px;background:#42475f;"></div>
<div class="r" style="left:462.44px;top:581.05px;width:1.00px;height:12.63px;background:#42475f;"></div>
<div class="r" style="left:486.56px;top:581.05px;width:1.00px;height:6.81px;background:#42475f;"></div>
<div class="r" style="left:486.56px;top:586.87px;width:5.43px;height:1.00px;background:#42475f;"></div>
<span class="icw" style="left:494.30px;top:581.35px"><span class="tsi" style="color:#3f9dbd">TS</span></span>
<span class="t" style="left:508.36px;top:581.35px;color:#cdd3ee;">owner.types.ts</span>
<div class="r" style="left:450.38px;top:593.08px;width:1.00px;height:12.63px;background:#42475f;"></div>
<div class="r" style="left:462.44px;top:593.08px;width:1.00px;height:12.63px;background:#42475f;"></div>
<span class="icw" style="left:470.18px;top:593.38px"><svg class="ic" viewBox="0 0 12 12"><path d="M2.500 9.200V2.900q0-.500.500-.500h2.600l.900 1.200h3.200q.500 0 .500.500v5.100q0 .500-.500.500H3q-.500 0-.500-.500z" fill="none" stroke="#9bb6ee" stroke-width="1"/></svg></span>
<span class="t" style="left:484.24px;top:593.38px;color:#82a2e4;">seat</span>
<div class="r" style="left:450.38px;top:605.11px;width:1.00px;height:12.63px;background:#42475f;"></div>
<div class="r" style="left:462.44px;top:605.11px;width:1.00px;height:12.63px;background:#42475f;"></div>
<span class="icw" style="left:470.18px;top:605.41px"><svg class="ic" viewBox="0 0 12 12"><path d="M2.500 9.200V2.900q0-.500.500-.500h2.600l.900 1.200h3.200q.500 0 .500.500v5.100q0 .500-.500.500H3q-.500 0-.500-.500z" fill="none" stroke="#9bb6ee" stroke-width="1"/></svg></span>
<span class="t" style="left:484.24px;top:605.41px;color:#82a2e4;">shadcn</span>
<div class="r" style="left:450.38px;top:617.14px;width:1.00px;height:12.63px;background:#42475f;"></div>
<div class="r" style="left:462.44px;top:617.14px;width:1.00px;height:12.63px;background:#42475f;"></div>
<span class="icw" style="left:470.18px;top:617.44px"><svg class="ic" viewBox="0 0 12 12"><path d="M2.500 9.200V2.900q0-.500.500-.500h2.600l.900 1.200h3.200q.500 0 .500.500v5.100q0 .500-.500.500H3q-.500 0-.500-.500z" fill="none" stroke="#9bb6ee" stroke-width="1"/></svg></span>
<span class="t" style="left:484.24px;top:617.44px;color:#82a2e4;">shared</span>
<div class="r" style="left:450.38px;top:629.17px;width:1.00px;height:12.63px;background:#42475f;"></div>
<div class="r" style="left:462.44px;top:629.17px;width:1.00px;height:12.63px;background:#42475f;"></div>
<span class="icw" style="left:470.18px;top:629.47px"><svg class="ic" viewBox="0 0 12 12"><path d="M2.500 9.200V2.900q0-.500.500-.500h2.600l.900 1.200h3.200q.500 0 .500.500v5.100q0 .500-.500.500H3q-.500 0-.500-.500z" fill="none" stroke="#9bb6ee" stroke-width="1"/></svg></span>
<span class="t" style="left:484.24px;top:629.47px;color:#82a2e4;">shop</span>
<div class="r" style="left:450.38px;top:641.20px;width:1.00px;height:12.63px;background:#42475f;"></div>
<div class="r" style="left:462.44px;top:641.20px;width:1.00px;height:6.81px;background:#42475f;"></div>
<div class="r" style="left:462.44px;top:647.01px;width:5.43px;height:1.00px;background:#42475f;"></div>
<span class="icw" style="left:470.18px;top:641.50px"><svg class="ic" viewBox="0 0 12 12"><path d="M2.500 9.200V2.900q0-.500.500-.500h2.600l.900 1.200h3.200q.500 0 .500.500v5.100q0 .500-.500.500H3q-.500 0-.500-.500z" fill="none" stroke="#9bb6ee" stroke-width="1"/></svg></span>
<span class="t" style="left:484.24px;top:641.50px;color:#82a2e4;">temp</span>
<div class="r" style="left:450.38px;top:653.23px;width:1.00px;height:12.63px;background:#42475f;"></div>
<span class="icw" style="left:458.12px;top:653.53px"><svg class="ic" viewBox="0 0 12 12"><path d="M2.500 9.200V2.900q0-.500.500-.500h2.600l.900 1.200h3.200q.500 0 .500.500v5.100q0 .500-.500.500H3q-.500 0-.500-.500z" fill="none" stroke="#9bb6ee" stroke-width="1"/></svg></span>
<span class="t" style="left:472.18px;top:653.53px;color:#82a2e4;">stores</span>
<div class="r" style="left:450.38px;top:665.26px;width:1.00px;height:6.81px;background:#42475f;"></div>
<div class="r" style="left:450.38px;top:671.07px;width:5.43px;height:1.00px;background:#42475f;"></div>
<span class="icw" style="left:458.12px;top:665.56px"><svg class="ic" viewBox="0 0 12 12"><path d="M2.500 9.200V2.900q0-.500.500-.500h2.600l.900 1.200h3.200q.500 0 .500.500v5.100q0 .500-.500.500H3q-.500 0-.500-.500z" fill="none" stroke="#9bb6ee" stroke-width="1"/></svg></span>
<span class="t" style="left:472.18px;top:665.56px;color:#82a2e4;">utils</span>
<span class="icw" style="left:446.06px;top:677.59px"><span class="tsi" style="color:#e08a3c">TS</span></span>
<span class="t" style="left:460.12px;top:677.59px;color:#cdd3ee;">axios.d.ts</span>
<span class="icw" style="left:446.06px;top:689.62px"><span class="jsi">{}</span></span>
<span class="t" style="left:460.12px;top:689.62px;color:#cdd3ee;">components.json</span>
<div class="r" style="left:430.00px;top:701.15px;width:66.30px;height:13.03px;background:#2d3049;"></div>
<span class="t" style="left:436.00px;top:701.65px;color:#a3a7f3;font-weight:bold;">N</span>
<span class="t" style="left:454.09px;top:701.65px;color:#a3a7f3;font-weight:bold;">NORMAL</span>
<span class="icw" style="left:499.03px;top:701.65px"><svg class="ic" viewBox="0 0 12 12"><path d="M2.500 1.500h4.500l2.500 2.500v6.500h-7z" fill="none" stroke="#b0b3c8" stroke-width="1.100"/><path d="M7 1.500v2.500h2.500" fill="none" stroke="#b0b3c8" stroke-width=".9"/></svg></span>
<span class="t" style="left:514.39px;top:701.65px;color:#9a9eb5;">[No Name]</span>
<div class="r" style="left:755.59px;top:701.15px;width:48.24px;height:13.03px;background:#2d3049;"></div>
<span class="t" style="left:773.68px;top:701.65px;color:#aaa9f5;font-weight:bold;">1:1</span>
<svg class="r" style="left:417.500px;top:54px;width:5px;height:24px" viewBox="0 0 5 24"><path d="M0 2l5 5M0 7l5 5M0 12l5 5M0 17l5 5" stroke="#6a6c70" stroke-width="1.600"/></svg>
<!--BROWSER-->
<div class="r" style="left:818.5px;top:37.4px;width:881.5px;height:338.8px;background:linear-gradient(180deg,#010101 0,#010101 35.2px,#f9fafb 35.2px);border-radius:5px 5px 6px 6px;border-top:.6px solid #2e2e2e"></div>
<div class="r" style="left:824.90px;top:44.50px;width:6.2px;height:6.2px;border-radius:50%;background:#f0544c;"></div>
<div class="r" style="left:835.70px;top:44.50px;width:6.2px;height:6.2px;border-radius:50%;background:#f5b731;"></div>
<div class="r" style="left:846.10px;top:44.50px;width:6.2px;height:6.2px;border-radius:50%;background:#35c24a;"></div>
<svg class="r" style="left:863.50px;top:44.00px;width:5px;height:7px;" viewBox="0 0 5 7"><path d="M3.800 .8L1.200 3.500l2.600 2.700" fill="none" stroke="#555" stroke-width=".9"/></svg>
<svg class="r" style="left:876.80px;top:42.80px;width:9.6px;height:9.6px;" viewBox="0 0 10 10"><circle cx="5" cy="5" r="4.300" fill="none" stroke="#e6e6e6" stroke-width=".9"/><path d="M5 2.600L7.300 6.600H2.700z" fill="#e6e6e6"/></svg>
<span class="s" style="left:888.70px;top:45.22px;font-size:5.9px;line-height:7.67px;letter-spacing:-0.078px;font-weight:bold;color:#ededed;">Create Next App</span>
<svg class="r" style="left:953.30px;top:45.20px;width:5px;height:5px;" viewBox="0 0 5 5"><path d="M.8.8l3.400 3.400M4.200.8L.8 4.200" stroke="#e4e4e4" stroke-width="1.200"/></svg>
<svg class="r" style="left:968.50px;top:45.00px;width:5.4px;height:5.4px;" viewBox="0 0 6 6"><path d="M3 .3v5.400M.3 3h5.400" stroke="#aaa" stroke-width=".8"/></svg>
<svg class="r" style="left:1659.50px;top:44.00px;width:5px;height:7px;" viewBox="0 0 5 7"><path d="M1.200 .8L3.800 3.500 1.200 6.200" fill="none" stroke="#444" stroke-width=".9"/></svg>
<svg class="r" style="left:1672.00px;top:43.50px;width:10px;height:8px;" viewBox="0 0 10 8"><path d="M2.500 7h5.200a2 2 0 0 0 .3-3.900 2.800 2.800 0 0 0-5.400.6A1.700 1.700 0 0 0 2.500 7z" fill="none" stroke="#9a9a9a" stroke-width=".8"/><path d="M3.600 6.900l1.400-2 1.400 2" fill="none" stroke="#9a9a9a" stroke-width=".7"/></svg>
<svg class="r" style="left:1687.50px;top:43.20px;width:8px;height:9px;" viewBox="0 0 8 9"><path d="M1.500 2.500l.5 5.700h4l.5-5.700M.8 2.300h6.400M3 2.200V1h2v1.200M3.200 3.800v3M4.800 3.800v3" fill="none" stroke="#9a9a9a" stroke-width=".8"/></svg>
<svg class="r" style="left:822.00px;top:60.00px;width:9.6px;height:8px;" viewBox="0 0 10 8"><rect x=".5" y=".5" width="9" height="7" rx="1.500" fill="none" stroke="#bdbdbd" stroke-width=".9"/><path d="M3.600.6v6.800" stroke="#bdbdbd" stroke-width=".9"/><path d="M1.500 2.300h1.200M1.500 3.800h1.200" stroke="#bdbdbd" stroke-width=".6"/></svg>
<svg class="r" style="left:855.50px;top:60.80px;width:9px;height:7px;" viewBox="0 0 9 7"><path d="M8.500 3.500H1M3.800.7L1 3.500l2.800 2.800" fill="none" stroke="#d8d8d8" stroke-width=".9"/></svg>
<svg class="r" style="left:873.00px;top:60.80px;width:9px;height:7px;" viewBox="0 0 9 7"><path d="M.5 3.500H8M5.200.7L8 3.500 5.200 6.300" fill="none" stroke="#5a5a5a" stroke-width=".9"/></svg>
<svg class="r" style="left:890.20px;top:60.00px;width:8.4px;height:8.4px;" viewBox="0 0 9 9"><path d="M7.600 5.200a3.300 3.300 0 1 1-.6-2.700" fill="none" stroke="#d8d8d8" stroke-width=".9"/><path d="M7.400.8v2h-2" fill="none" stroke="#d8d8d8" stroke-width=".9"/></svg>
<svg class="r" style="left:906.30px;top:60.30px;width:7px;height:8px;" viewBox="0 0 7 8"><path d="M.7 1h5.600v3.200Q6.300 6.300 3.500 7.400.7 6.300.7 4.200z" fill="none" stroke="#c8c8c8" stroke-width=".9"/></svg>
<span class="s" style="left:918.80px;top:60.12px;font-size:7px;line-height:9.1px;letter-spacing:0.530px;font-weight:bold;color:#eee;">V</span>
<span class="s" style="left:928.80px;top:60.82px;font-size:6.3px;line-height:8.19px;letter-spacing:-0.141px;font-weight:normal;color:#b4b4b4;">http:</span>
<span class="s" style="left:940.90px;top:60.82px;font-size:6.3px;line-height:8.19px;letter-spacing:0.796px;font-weight:normal;color:#b4b4b4;">//</span>
<span class="s" style="left:945.40px;top:60.82px;font-size:6.3px;line-height:8.19px;letter-spacing:-0.008px;font-weight:bold;color:#f0f0f0;">localhost</span>
<span class="s" style="left:973.20px;top:60.82px;font-size:6.3px;line-height:8.19px;letter-spacing:0.174px;font-weight:normal;color:#c2c2c2;">:3000/owners/dashboard</span>
<svg class="r" style="left:1592.50px;top:62.30px;width:8px;height:4.4px;" viewBox="0 0 8 4.400"><circle cx="1.700" cy="2.200" r="1.500" fill="#ccc"/><path d="M3 2.200h4.500M6 2.200v1.600M7.300 2.200v1.200" stroke="#ccc" stroke-width=".9"/></svg>
<svg class="r" style="left:1605.00px;top:60.50px;width:5px;height:7.5px;" viewBox="0 0 5 7.500"><path d="M.6.5h3.800v6.300L2.500 5.300.6 6.800z" fill="none" stroke="#bbb" stroke-width=".8"/></svg>
<svg class="r" style="left:1637.00px;top:60.80px;width:7px;height:7px;" viewBox="0 0 7 7"><circle cx="3.500" cy="3.500" r="2.200" fill="none" stroke="#4a4a4a" stroke-width="1.400" stroke-dasharray="1.100 .63"/><circle cx="3.500" cy="3.500" r="1" fill="none" stroke="#4a4a4a" stroke-width=".6"/></svg>
<div class="r" style="left:1653.80px;top:60.30px;width:8.00px;height:8.00px;background:#e0443c;border-radius:1.500px;"></div>
<svg class="r" style="left:1655.30px;top:61.80px;width:5px;height:5px;" viewBox="0 0 5 5"><path d="M1 4.500V2.500l1.500-1.700L4 2.500v2z" fill="#f7b0a8"/></svg>
<div class="r" style="left:1670.30px;top:60.30px;width:8.00px;height:8.00px;background:#d6d6d6;border-radius:1.500px;"></div>
<div class="r" style="left:1672.30px;top:62.30px;width:4.00px;height:4.00px;background:#f4f4f4;"></div>
<div class="r" style="left:1684.50px;top:57.70px;width:13px;height:13px;border-radius:50%;background:#e9e9e9;"></div>
<svg class="r" style="left:1684.50px;top:57.70px;width:13px;height:13px;" viewBox="0 0 13 13"><circle cx="6.500" cy="5" r="2.400" fill="#5a5a5a"/><path d="M2 11.200q.6-3.500 4.500-3.500t4.500 3.500a6 6 0 0 1-9 0z" fill="#5a5a5a"/></svg>
<span class="s" style="left:890.90px;top:91.96px;font-size:16.2px;line-height:21.06px;letter-spacing:0.382px;font-weight:bold;color:#111827;">Owner Dashboard</span>
<span class="s" style="left:890.90px;top:119.23px;font-size:8.9px;line-height:11.57px;letter-spacing:0.210px;font-weight:normal;color:#6c7280;">Welcome back, Angel</span>
<svg class="r" style="left:983.00px;top:118.80px;width:10px;height:10px;" viewBox="0 0 10 10"><g transform="rotate(-28 5 5)"><rect x="2.400" y="1.300" width="5.400" height="7.600" rx="2.300" fill="#f5c451"/><rect x="1.100" y="4.200" width="2.400" height="3.600" rx="1.200" fill="#f0b73e"/><path d="M4.200 1.500v3M5.600 1.300v3.200" stroke="#e9ad34" stroke-width=".4"/></g></svg>
<div class="r" style="left:890.50px;top:149.20px;width:232.50px;height:164.20px;background:#fafbfc;border:1px solid #f3f4f6;border-radius:4px;box-shadow:0 1px 2px rgba(0,0,0,.07)"></div>
<svg class="r" style="left:906.80px;top:164.20px;width:10px;height:11.5px;" viewBox="0 0 10 11.500"><circle cx="5" cy="3.200" r="2.200" fill="none" stroke="#1f2430" stroke-width="1"/><path d="M1 11V9.800Q1 7.300 3.500 7.300h3Q9 7.300 9 9.800V11" fill="none" stroke="#1f2430" stroke-width="1"/></svg>
<span class="s" style="left:923.60px;top:165.13px;font-size:9.0px;line-height:11.7px;letter-spacing:0.038px;font-weight:bold;color:#1a1f2b;">Profile Information</span>
<span class="s" style="left:904.80px;top:206.43px;font-size:7.7px;line-height:10.01px;letter-spacing:0.201px;font-weight:normal;color:#8a8f9b;">Full Name</span>
<span class="s" style="left:904.80px;top:218.18px;font-size:8.95px;line-height:11.63px;letter-spacing:0.291px;font-weight:normal;color:#141a26;-webkit-text-stroke:.12px #141a26;">Angel Haro</span>
<span class="s" style="left:904.80px;top:240.43px;font-size:7.7px;line-height:10.01px;letter-spacing:0.084px;font-weight:normal;color:#8a8f9b;">Email</span>
<span class="s" style="left:904.80px;top:253.18px;font-size:8.95px;line-height:11.63px;letter-spacing:0.220px;font-weight:normal;color:#141a26;-webkit-text-stroke:.12px #141a26;">angel@aharoj.io</span>
<span class="s" style="left:904.80px;top:275.43px;font-size:7.7px;line-height:10.01px;letter-spacing:0.283px;font-weight:normal;color:#8a8f9b;">Phone</span>
<span class="s" style="left:904.80px;top:286.93px;font-size:9.2px;line-height:11.96px;letter-spacing:0.725px;font-weight:normal;color:#141a26;-webkit-text-stroke:.12px #141a26;">5620006969</span>
<div class="r" style="left:1568.30px;top:94.80px;width:57.90px;height:30.20px;background:#fbfbfc;border:1px solid #f4f5f7;border-radius:3px;box-shadow:0 .5px 1.500px rgba(0,0,0,.05)"></div>
<svg class="r" style="left:1577.80px;top:100.60px;width:9px;height:9px;" viewBox="0 0 9 9"><path d="M4.500 .7l3.200 1.600v1.200L4.500 5.100 1.300 3.500V2.300z" fill="none" stroke="#444a57" stroke-width=".8"/><path d="M1.300 4.800l3.200 1.600 3.200-1.600M1.300 6.300l3.200 1.600 3.200-1.600" fill="none" stroke="#444a57" stroke-width=".8"/></svg>
<span class="s" style="left:1577.70px;top:111.23px;font-size:7.9px;line-height:10.27px;letter-spacing:0.209px;font-weight:normal;color:#1d2230;-webkit-text-stroke:.1px #1d2230;">Edit Profile</span>
<span class="s" style="left:1142.90px;top:157.54px;font-size:10.6px;line-height:13.78px;letter-spacing:0.089px;font-weight:bold;color:#161b27;">Your Shops</span>
<div class="r" style="left:1554.20px;top:150.80px;width:73.70px;height:27.50px;background:#fbfbfc;border:1px solid #f4f5f7;border-radius:3px;box-shadow:0 .5px 1.500px rgba(0,0,0,.05)"></div>
<svg class="r" style="left:1562.60px;top:153.30px;width:9.2px;height:9.2px;" viewBox="0 0 9.200 9.200"><circle cx="4.600" cy="4.600" r="3.900" fill="none" stroke="#2a2f3c" stroke-width=".9"/><path d="M4.600 2.700v3.800M2.700 4.600h3.800" stroke="#2a2f3c" stroke-width=".9"/></svg>
<span class="s" style="left:1563.00px;top:164.23px;font-size:7.9px;line-height:10.27px;letter-spacing:0.254px;font-weight:normal;color:#1d2230;-webkit-text-stroke:.1px #1d2230;">Add New Shop</span>
<div class="r" style="left:1142.30px;top:192.70px;width:239.20px;height:99.30px;background:#fafbfc;border:1px solid #f3f4f6;border-radius:4px;box-shadow:0 1px 2px rgba(0,0,0,.07)"></div>
<span class="s" style="left:1157.00px;top:208.94px;font-size:10.2px;line-height:13.26px;letter-spacing:0.237px;font-weight:bold;color:#161b27;">20/20 Shop</span>
<span class="s" style="left:1334.00px;top:211.23px;font-size:8.9px;line-height:11.57px;letter-spacing:0.252px;font-weight:bold;color:#1d2230;">4 seats</span>
<span class="s" style="left:1157.00px;top:244.43px;font-size:7.7px;line-height:10.01px;letter-spacing:0.207px;font-weight:normal;color:#7b808c;">123 Street</span>
<div class="r" style="left:1159.70px;top:263.40px;width:64.10px;height:14.60px;background:#fbfbfc;border:1px solid #f4f5f7;border-radius:3px;box-shadow:0 .5px 1.500px rgba(0,0,0,.05)"></div>
<span class="s" style="left:1164.50px;top:266.18px;font-size:8.95px;line-height:11.63px;letter-spacing:0.247px;font-weight:normal;color:#1d2230;-webkit-text-stroke:.1px #1d2230;">View Details</span>
<div class="r" style="left:1231.80px;top:263.40px;width:52.20px;height:14.60px;background:#fbfbfc;border:1px solid #f4f5f7;border-radius:3px;box-shadow:0 .5px 1.500px rgba(0,0,0,.05)"></div>
<span class="s" style="left:1236.30px;top:266.18px;font-size:8.95px;line-height:11.63px;letter-spacing:0.272px;font-weight:normal;color:#1d2230;-webkit-text-stroke:.1px #1d2230;">Edit Shop</span>
<div class="r" style="left:1390.30px;top:192.70px;width:237.60px;height:99.30px;background:#fafbfc;border:1px solid #f3f4f6;border-radius:4px;box-shadow:0 1px 2px rgba(0,0,0,.07)"></div>
<span class="s" style="left:1404.70px;top:208.94px;font-size:10.2px;line-height:13.26px;letter-spacing:-0.111px;font-weight:bold;color:#161b27;">The Cut</span>
<span class="s" style="left:1583.00px;top:211.23px;font-size:8.9px;line-height:11.57px;letter-spacing:-0.048px;font-weight:bold;color:#1d2230;">1 seats</span>
<span class="s" style="left:1404.70px;top:244.43px;font-size:7.7px;line-height:10.01px;letter-spacing:0.196px;font-weight:normal;color:#7b808c;">321 Street</span>
<div class="r" style="left:1405.50px;top:263.40px;width:65.40px;height:14.60px;background:#fbfbfc;border:1px solid #f4f5f7;border-radius:3px;box-shadow:0 .5px 1.500px rgba(0,0,0,.05)"></div>
<span class="s" style="left:1412.20px;top:266.18px;font-size:8.95px;line-height:11.63px;letter-spacing:0.220px;font-weight:normal;color:#1d2230;-webkit-text-stroke:.1px #1d2230;">View Details</span>
<div class="r" style="left:1477.60px;top:263.40px;width:53.40px;height:14.60px;background:#fbfbfc;border:1px solid #f4f5f7;border-radius:3px;box-shadow:0 .5px 1.500px rgba(0,0,0,.05)"></div>
<span class="s" style="left:1483.70px;top:266.18px;font-size:8.95px;line-height:11.63px;letter-spacing:0.222px;font-weight:normal;color:#1d2230;-webkit-text-stroke:.1px #1d2230;">Edit Shop</span>
<div class="r" style="left:827.70px;top:349.90px;width:17px;height:17px;border-radius:50%;background:#0b0b0c;box-shadow:0 1px 3px rgba(0,0,0,.35);"></div>
<svg class="r" style="left:831.70px;top:353.40px;width:9px;height:10px;" viewBox="0 0 9 10"><path d="M5.200 .8L1.500 5.600h2.600L3.600 9.200 7.500 4.300H4.800z" fill="none" stroke="#f4f4f4" stroke-width=".9" stroke-linejoin="round"/></svg>
<div class="r" style="left:1665.500px;top:342px;width:28px;height:28px;border-radius:50%;overflow:hidden;box-shadow:0 0 3px 1px rgba(255,255,255,.9),0 1px 3px rgba(0,0,0,.12);background:linear-gradient(180deg,#9fdcc4 0%,#b9e6c0 22%,#f7c98a 40%,#f6a877 58%,#f2a070 62%,#1f6f5c 64%,#2a7d5e 72%,#8cc63a 74%,#b4d42a 100%)"><div class="r" style="left:17px;top:1.500px;width:9px;height:9px;border-radius:50%;background:radial-gradient(circle,#f7b733 40%,rgba(247,183,51,0) 75%)"></div><div class="r" style="left:5.500px;top:17.500px;width:17px;height:13px;border-radius:50%;background:linear-gradient(180deg,#a6d21f,#c9da24)"></div><div class="r" style="left:9.500px;top:11px;width:2.200px;height:7.500px;background:#b3451f"></div><div class="r" style="left:12.500px;top:13px;width:1.600px;height:5px;background:#c0562a"></div><div class="r" style="left:5.500px;top:7.500px;width:10px;height:5.500px;border-radius:50%;background:#2d8f2d"></div></div>
<div class="r" style="left:948.00px;top:377.20px;width:60.00px;height:3.60px;background:#23241f;border-radius:1px;"></div>
<div class="r" style="left:1058.00px;top:377.20px;width:30.00px;height:3.60px;background:#2b2c25;border-radius:1px;"></div>
<div class="r" style="left:1098.00px;top:377.20px;width:64.00px;height:3.60px;background:#25261f;border-radius:1px;"></div>
<div class="r" style="left:1210.00px;top:377.20px;width:40.00px;height:3.60px;background:#1d1e1a;border-radius:1px;"></div>
<div class="r" style="left:1388.00px;top:377.20px;width:34.00px;height:3.60px;background:#2a2b24;border-radius:1px;"></div>
<div class="r" style="left:1468.00px;top:377.20px;width:24.00px;height:3.60px;background:#26271f;border-radius:1px;"></div>
<div class="r" style="left:1556.00px;top:377.20px;width:84.00px;height:3.60px;background:#24251f;border-radius:1px;"></div>
<div class="r" style="left:1652.00px;top:377.20px;width:30.00px;height:3.60px;background:#1f201b;border-radius:1px;"></div>
<!--TERM-->
<div class="r" style="left:818.5px;top:381.6px;width:881.5px;height:338.6px;border-radius:5px;background:radial-gradient(ellipse 60px 120px at 455px 80px,rgba(150,150,165,.10),transparent 75%),radial-gradient(ellipse 70px 130px at 590px 90px,rgba(150,150,165,.11),transparent 75%),radial-gradient(ellipse 70px 140px at 735px 100px,rgba(150,150,165,.12),transparent 75%),radial-gradient(ellipse 60px 150px at 830px 120px,rgba(150,150,165,.10),transparent 75%),radial-gradient(ellipse 120px 130px at 740px 250px,rgba(150,150,165,.13),transparent 75%),radial-gradient(ellipse 150px 90px at 330px 60px,rgba(150,150,165,.07),transparent 75%),radial-gradient(ellipse 160px 120px at 520px 240px,rgba(150,150,165,.07),transparent 75%),linear-gradient(180deg,#242635 0%,#222433 55%,#1f2130 100%)"></div>
<div class="r" style="left:818.5px;top:381.6px;width:881.5px;height:338.6px;border-radius:5px;overflow:hidden"><div class="r" style="left:560px;top:190px;width:360px;height:90px;transform:rotate(33deg);background:radial-gradient(ellipse 50% 50% at 50% 50%,rgba(150,150,168,.15),transparent 100%)"></div><div class="r" style="left:40px;top:30px;width:300px;height:110px;background:radial-gradient(ellipse 50% 50% at 50% 50%,rgba(150,150,168,.05),transparent 100%)"></div></div>
<div class="r" style="left:1699.20px;top:390.00px;width:0.80px;height:215.00px;background:rgba(210,212,225,.45);"></div>
<span class="m" style="left:831.30px;top:383.93px;color:#4f6497;font-family:'DejaVu Sans Mono','Liberation Mono',monospace;font-size:8px">↳</span>
<span class="m" style="left:841.24px;top:383.93px;color:#4f6497;">SERVERS</span>
<svg class="r" style="left:880.98px;top:383.30px;width:5px;height:10px;" viewBox="0 0 5 10"><path d="M4.300.7L1 5l3.300 4.300" fill="none" stroke="#3e4560" stroke-width=".8"/></svg>
<span class="m" style="left:890.92px;top:383.93px;color:#475a8c;">barbershop-frontend</span>
<svg class="r" style="left:990.28px;top:383.30px;width:5px;height:10px;" viewBox="0 0 5 10"><path d="M.7.7L4 5 .7 9.300" fill="none" stroke="#3e4560" stroke-width=".8"/></svg>
<svg class="r" style="left:1533.60px;top:383.30px;width:5px;height:10px;" viewBox="0 0 5 10"><path d="M4.300.7L1 5l3.300 4.300" fill="none" stroke="#4a4c5e" stroke-width=".8"/></svg>
<span class="m" style="left:1543.04px;top:383.93px;color:#66677a;">07:58 PM | February 28, 2025</span>
<svg class="r" style="left:1687.80px;top:383.30px;width:5px;height:10px;" viewBox="0 0 5 10"><path d="M.7.7L4 5 .7 9.300" fill="none" stroke="#4a4c5e" stroke-width=".8"/></svg>
<svg class="r" style="left:831.30px;top:394.64px;width:5px;height:7px;" viewBox="0 0 5 7"><path d="M.6 4l1.300 1.800L4.300.8" fill="none" stroke="#8fdc6f" stroke-width="1.300"/></svg>
<span class="m" style="left:841.24px;top:393.87px;">Compiled /shops/create in 222ms</span>
<span class="m" style="left:831.30px;top:403.81px;">GET /shops/create <span class="g">200</span> in 250ms</span>
<svg class="r" style="left:831.30px;top:414.52px;width:5px;height:7px;" viewBox="0 0 5 7"><path d="M.6 4l1.300 1.800L4.300.8" fill="none" stroke="#8fdc6f" stroke-width="1.300"/></svg>
<span class="m" style="left:841.24px;top:413.75px;">Compiled /shops/[shopId] in 249ms</span>
<span class="m" style="left:831.30px;top:423.69px;">GET /shops/1 <span class="g">200</span> in 830ms</span>
<svg class="r" style="left:831.30px;top:434.40px;width:5px;height:7px;" viewBox="0 0 5 7"><path d="M.6 4l1.300 1.800L4.300.8" fill="none" stroke="#8fdc6f" stroke-width="1.300"/></svg>
<span class="m" style="left:841.24px;top:433.62px;">Compiled /shops/[shopId]/seats in 256ms</span>
<span class="m" style="left:831.30px;top:443.56px;">GET /shops/1/seats <span class="g">200</span> in 762ms</span>
<span class="m" style="left:831.30px;top:453.50px;">GET /shops/1 <span class="g">200</span> in 45ms</span>
<span class="m" style="left:831.30px;top:463.44px;">GET /owners/dashboard <span class="g">200</span> in 35ms</span>
<span class="m" style="left:831.30px;top:473.38px;">GET /shops/create <span class="g">200</span> in 32ms</span>
<span class="m" style="left:831.30px;top:483.32px;">GET /shops/2 <span class="g">200</span> in 40ms</span>
<span class="m" style="left:831.30px;top:493.26px;">GET /shops/2/seats <span class="g">200</span> in 34ms</span>
<span class="m" style="left:831.30px;top:503.21px;">GET /shops/2 <span class="g">200</span> in 34ms</span>
<span class="m" style="left:831.30px;top:513.14px;">GET /owners/dashboard <span class="g">200</span> in 31ms</span>
<div class="r" style="left:826.50px;top:522.86px;width:4.90px;height:9.20px;background:transparent;border:1px solid #b9bdd0;"></div>
<div class="r" style="left:826.50px;top:537.00px;width:866.00px;height:1.00px;background:#8a8e9f;"></div>
<div class="r" style="left:826.80px;top:543.70px;width:7.500px;height:7.500px;border-radius:1.500px;background:#3fc23f"></div>
<svg class="r" style="left:828.00px;top:544.70px;width:5.5px;height:5.5px;" viewBox="0 0 5.500 5.500"><path d="M.8 2.900l1.400 1.500L4.800.9" fill="none" stroke="#fff" stroke-width="1.100"/></svg>
<span class="m" style="left:841.40px;top:543.23px;">Valid JWT token</span>
<span class="m" style="left:826.50px;top:553.19px;">Hibernate: select u1_0.id,u1_0.email,u1_0.password,u1_0.username from users u1_0 where u1_0.username=?</span>
<span class="m" style="left:826.50px;top:563.15px;">Hibernate: select r1_0.user_id,r1_1.id,r1_1.role_type from user_role r1_0 join roles r1_1 on r1_1.id=r1_0.role_id where r1_0.user_id=?</span>
<span class="m" style="left:826.50px;top:573.12px;">Hibernate: select s1_0.id,s1_0.address,s1_0.name,s1_0.owner_id from shops s1_0 where s1_0.id=?</span>
<span class="m" style="left:826.50px;top:583.09px;">Hibernate: select s1_0.shop_id,s1_0.id,s1_0.association_id,s1_0.seat_name from seats s1_0 where s1_0.shop_id=?</span>
<div class="r" style="left:826.80px;top:593.53px;width:7.500px;height:7.500px;border-radius:1.500px;background:#3fc23f"></div>
<svg class="r" style="left:828.00px;top:594.53px;width:5.5px;height:5.5px;" viewBox="0 0 5.500 5.500"><path d="M.8 2.900l1.400 1.500L4.800.9" fill="none" stroke="#fff" stroke-width="1.100"/></svg>
<span class="m" style="left:841.40px;top:593.05px;">Valid JWT token</span>
<div class="r" style="left:826.80px;top:603.49px;width:7.500px;height:7.500px;border-radius:1.500px;background:#3fc23f"></div>
<svg class="r" style="left:828.00px;top:604.49px;width:5.5px;height:5.5px;" viewBox="0 0 5.500 5.500"><path d="M.8 2.900l1.400 1.500L4.800.9" fill="none" stroke="#fff" stroke-width="1.100"/></svg>
<span class="m" style="left:841.40px;top:603.01px;">Valid JWT token</span>
<span class="m" style="left:826.50px;top:612.98px;">Hibernate: select u1_0.id,u1_0.email,u1_0.password,u1_0.username from users u1_0 where u1_0.username=?</span>
<span class="m" style="left:826.50px;top:622.95px;">Hibernate: select u1_0.id,u1_0.email,u1_0.password,u1_0.username from users u1_0 where u1_0.username=?</span>
<span class="m" style="left:826.50px;top:632.91px;">Hibernate: select r1_0.user_id,r1_1.id,r1_1.role_type from user_role r1_0 join roles r1_1 on r1_1.id=r1_0.role_id where r1_0.user_id=?</span>
<span class="m" style="left:826.50px;top:642.88px;">Hibernate: select r1_0.user_id,r1_1.id,r1_1.role_type from user_role r1_0 join roles r1_1 on r1_1.id=r1_0.role_id where r1_0.user_id=?</span>
<span class="m" style="left:826.50px;top:652.84px;">Hibernate: select o1_0.id,o1_0.email,o1_0.first_name,o1_0.last_name,o1_0.phone_number,o1_0.user_id from owner_profile o1_0 where o1_0.id=?</span>
<span class="m" style="left:826.50px;top:662.81px;">Hibernate: select o1_0.id,o1_0.email,o1_0.first_name,o1_0.last_name,o1_0.phone_number,o1_0.user_id from owner_profile o1_0 where o1_0.user_id=?</span>
<span class="m" style="left:826.50px;top:672.77px;">Hibernate: select s1_0.id,s1_0.address,s1_0.name,s1_0.owner_id from shops s1_0 where s1_0.owner_id=?</span>
<span class="m" style="left:826.50px;top:682.74px;">Hibernate: select s1_0.shop_id,s1_0.id,s1_0.association_id,s1_0.seat_name from seats s1_0 where s1_0.shop_id=?</span>
<span class="m" style="left:826.50px;top:692.70px;">Hibernate: select s1_0.shop_id,s1_0.id,s1_0.association_id,s1_0.seat_name from seats s1_0 where s1_0.shop_id=?</span>
</body></html>
